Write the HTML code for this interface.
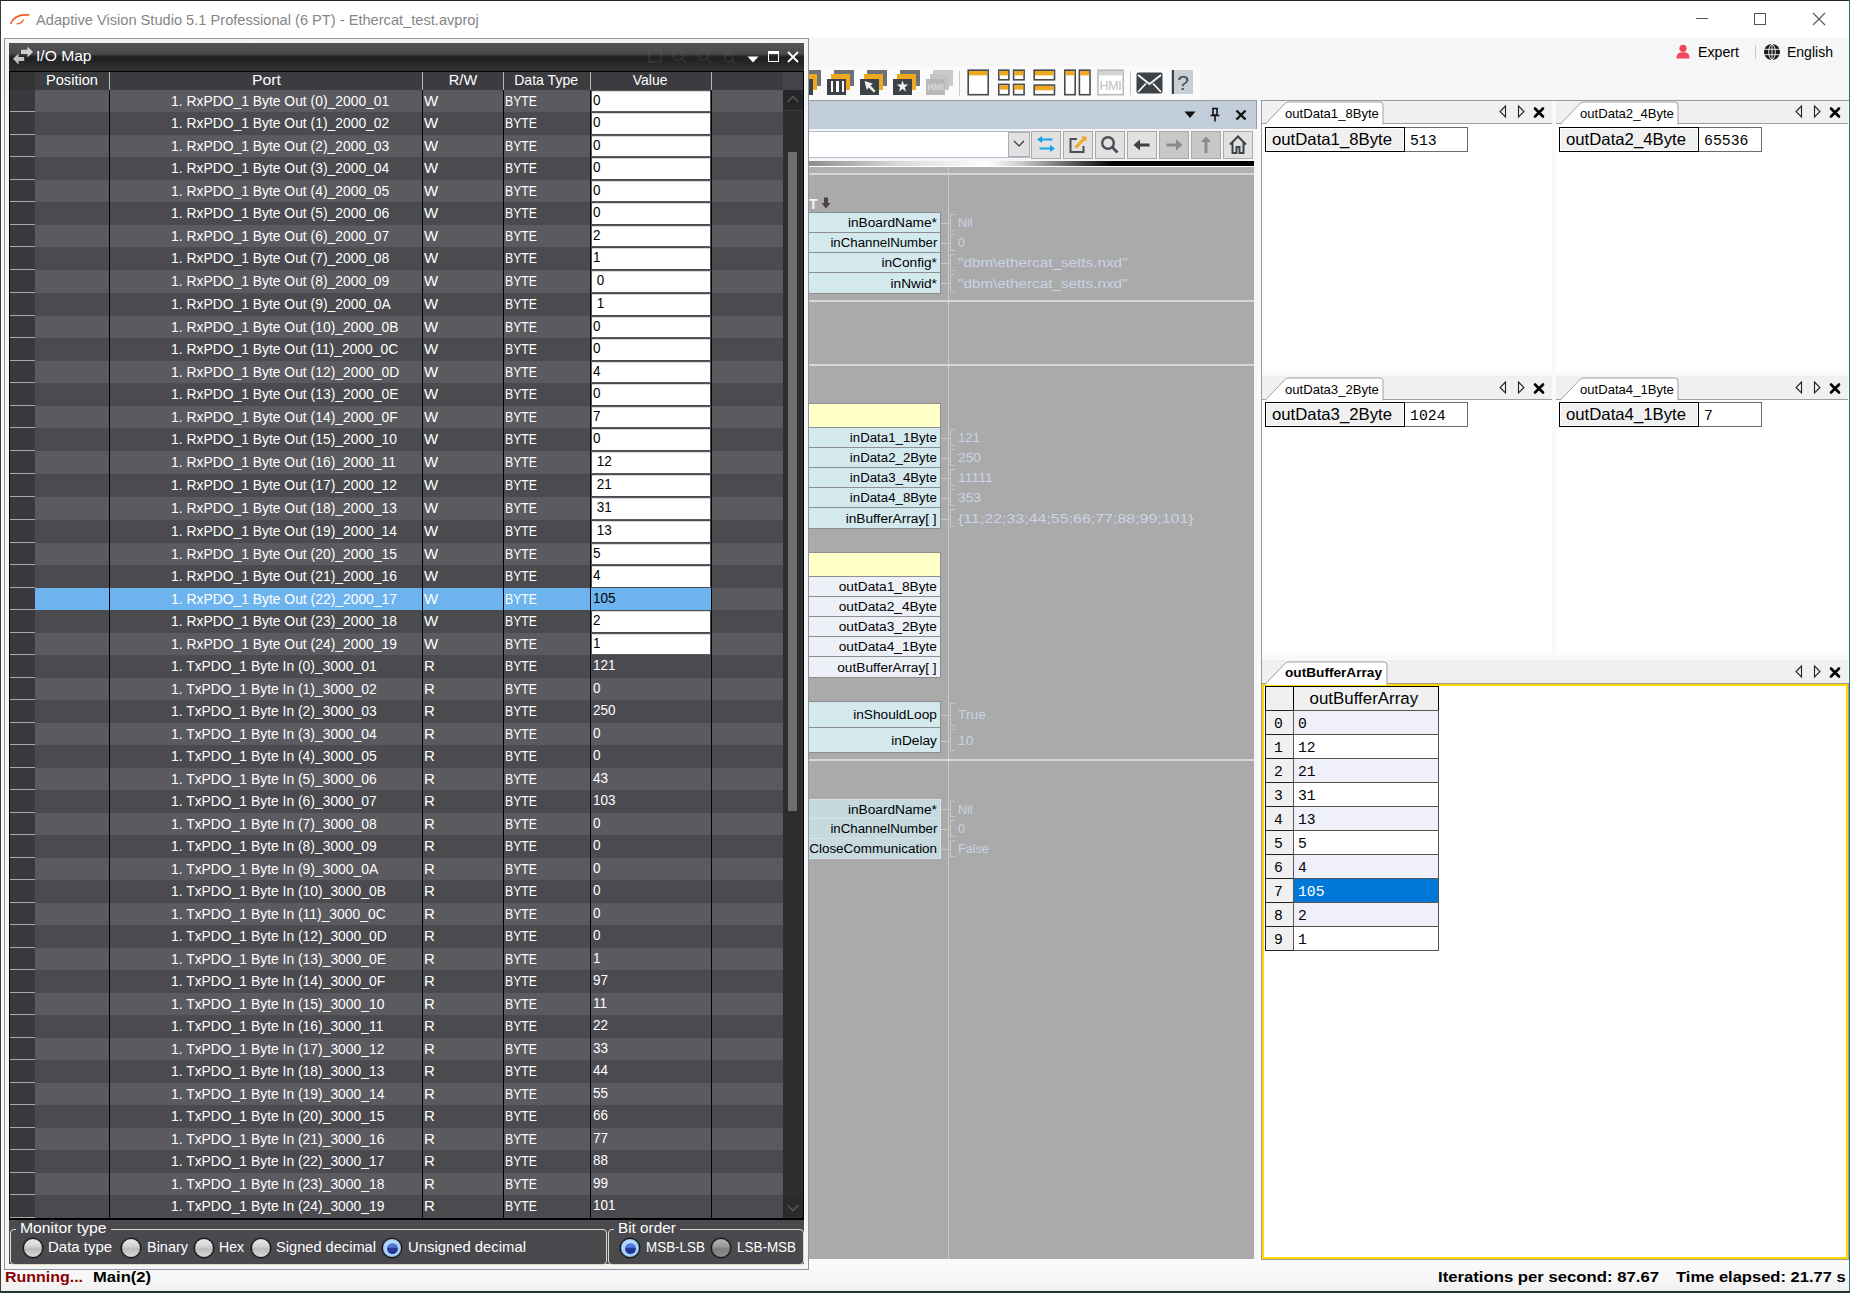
<!DOCTYPE html><html><head><meta charset="utf-8"><style>
*{margin:0;padding:0;box-sizing:border-box}
html,body{width:1850px;height:1293px;overflow:hidden;background:#f0f0f0;font-family:"Liberation Sans",sans-serif;}
.ab{position:absolute}
.t{position:absolute;white-space:pre;line-height:1}
</style></head><body>

<div class="ab" style="left:0px;top:0px;width:1850px;height:1293px;background:#f9f9f9"></div>
<div class="ab" style="left:0px;top:0px;width:1850px;height:38px;background:#ffffff"></div>
<div class="ab" style="left:0px;top:38px;width:1850px;height:62px;background:#f6f6f6"></div>
<div class="ab" style="left:790px;top:66px;width:411px;height:34px;background:#fafafa"></div>
<div class="ab" style="left:0px;top:1259px;width:1850px;height:32px;background:linear-gradient(#fafafa,#f7f7f7 60%,#efefef)"></div>
<div class="ab" style="left:0px;top:0px;width:1850px;height:1px;background:#262626"></div>
<div class="ab" style="left:0px;top:0px;width:1px;height:1293px;background:#3a3a3a"></div>
<div class="ab" style="left:1849px;top:0px;width:1px;height:1293px;background:#2f6f78"></div>
<div class="ab" style="left:0px;top:1291px;width:1850px;height:2px;background:#263238"></div>
<svg class="ab" style="left:9px;top:12px" width="22" height="14" viewBox="0 0 22 14"><path d="M1.5 12 C4 5 11 2 20.5 3" stroke="#f05a22" stroke-width="1.7" fill="none"/><path d="M7.5 11.8 C10.5 11.8 13.5 10 14.5 7.5" stroke="#f05a22" stroke-width="1.3" fill="none"/></svg>
<div class="t" style="left:35.50px;top:12.92px;font-size:14.5px;font-family:'Liberation Sans', sans-serif;font-weight:normal;color:#858585;transform:scaleX(1.0085);transform-origin:left 0;">Adaptive Vision Studio 5.1 Professional (6 PT) - Ethercat_test.avproj</div>
<div class="ab" style="left:1696px;top:18px;width:12px;height:1px;background:#555"></div>
<div class="ab" style="left:1754px;top:13px;width:12px;height:12px;border:1px solid #555"></div>
<svg class="ab" style="left:1812px;top:12px" width="14" height="14"><path d="M1 1L13 13M13 1L1 13" stroke="#555" stroke-width="1.1"/></svg>
<svg class="ab" style="left:1676px;top:44px" width="14" height="15" viewBox="0 0 14 15"><circle cx="7" cy="4.3" r="3.6" fill="#f0475c"/><path d="M0.5 14.5 C0.5 9.5 3 8.3 7 8.3 C11 8.3 13.5 9.5 13.5 14.5Z" fill="#f0475c"/></svg>
<div class="t" style="left:1698px;top:45px;font-size:14.2px;color:#000">Expert</div>
<div class="ab" style="left:1755px;top:45px;width:1px;height:14px;background:#c8c8c8"></div>
<svg class="ab" style="left:1763px;top:43px" width="18" height="18" viewBox="0 0 18 18"><circle cx="9" cy="9" r="8" fill="#1a1a1a"/><g stroke="#f9f9f9" stroke-width="0.9" fill="none"><ellipse cx="9" cy="9" rx="3.3" ry="7.6"/><line x1="9" y1="1" x2="9" y2="17"/><line x1="1" y1="6.3" x2="17" y2="6.3"/><line x1="1" y1="11.7" x2="17" y2="11.7"/></g></svg>
<div class="t" style="left:1787px;top:45px;font-size:14px;color:#000">English</div>
<div class="ab" style="left:801px;top:70px;width:20px;height:16px;background:#6b7278"></div>
<div class="ab" style="left:798px;top:74px;width:19px;height:16px;background:#f0a81e"></div>
<div class="ab" style="left:794px;top:79px;width:19px;height:16px;background:#3d4247"></div>
<div class="ab" style="left:834px;top:70px;width:20px;height:16px;background:#6b7278"></div>
<div class="ab" style="left:831px;top:74px;width:19px;height:16px;background:#f0a81e"></div>
<div class="ab" style="left:827px;top:79px;width:19px;height:16px;background:#3d4247"></div>
<div class="ab" style="left:830.5px;top:81px;width:2.5px;height:11px;background:#fff"></div><div class="ab" style="left:836px;top:81px;width:2.5px;height:11px;background:#fff"></div><div class="ab" style="left:841.5px;top:81px;width:2.5px;height:11px;background:#fff"></div>
<div class="ab" style="left:867px;top:70px;width:20px;height:16px;background:#6b7278"></div>
<div class="ab" style="left:864px;top:74px;width:19px;height:16px;background:#f0a81e"></div>
<div class="ab" style="left:860px;top:79px;width:19px;height:16px;background:#3d4247"></div>
<svg class="ab" style="left:863px;top:80px" width="14" height="14" viewBox="0 0 14 14"><path d="M1.5 1L10 3.8L7.4 5.6L12.5 10.8L10.8 12.5L5.6 7.4L3.8 10Z" fill="#f2f2f2"/></svg>
<div class="ab" style="left:900px;top:70px;width:20px;height:16px;background:#6b7278"></div>
<div class="ab" style="left:897px;top:74px;width:19px;height:16px;background:#f0a81e"></div>
<div class="ab" style="left:893px;top:79px;width:19px;height:16px;background:#3d4247"></div>
<svg class="ab" style="left:896px;top:80px" width="13" height="13" viewBox="0 0 13 13"><path d="M6.5 0.5L7.9 4.6L12.3 4.6L8.8 7.3L10.1 11.6L6.5 9L2.9 11.6L4.2 7.3L0.7 4.6L5.1 4.6Z" fill="#f2f2f2"/></svg>
<div class="ab" style="left:933px;top:70px;width:20px;height:16px;background:#c9c9c9"></div>
<div class="ab" style="left:930px;top:74px;width:19px;height:16px;background:#c4c4c4"></div>
<div class="ab" style="left:926px;top:79px;width:19px;height:16px;background:#b8b8b8"></div>
<div class="t" style="left:926px;top:83px;font-size:9px;color:#d8d8d8;font-weight:bold;width:19px;text-align:center">HMI</div>
<div class="ab" style="left:959px;top:71px;width:1px;height:25px;background:#c8c8c8"></div>
<svg class="ab" style="left:967px;top:69px" width="28" height="27" viewBox="0 0 28 27"><rect x="1.2000000000000002" y="1.2000000000000002" width="20.0" height="24.5" fill="#fff" stroke="#454b51" stroke-width="1.6"/><rect x="2.0" y="2.0" width="18.400000000000002" height="4.4" fill="#f0a81e"/></svg>
<svg class="ab" style="left:998px;top:69px" width="28" height="27" viewBox="0 0 28 27"><rect x="0.8" y="1.2000000000000002" width="10.1" height="9.6" fill="#fff" stroke="#454b51" stroke-width="1.6"/><rect x="1.6" y="2.0" width="8.5" height="4.4" fill="#f0a81e"/><rect x="15.600000000000001" y="1.2000000000000002" width="10.5" height="9.6" fill="#fff" stroke="#454b51" stroke-width="1.6"/><rect x="16.400000000000002" y="2.0" width="8.899999999999999" height="4.4" fill="#f0a81e"/><rect x="0.8" y="15.4" width="10.1" height="10.3" fill="#fff" stroke="#454b51" stroke-width="1.6"/><rect x="1.6" y="16.2" width="8.5" height="4.4" fill="#f0a81e"/><rect x="15.600000000000001" y="15.4" width="10.5" height="10.3" fill="#fff" stroke="#454b51" stroke-width="1.6"/><rect x="16.400000000000002" y="16.2" width="8.899999999999999" height="4.4" fill="#f0a81e"/></svg>
<svg class="ab" style="left:1033px;top:69px" width="28" height="27" viewBox="0 0 28 27"><rect x="1.2000000000000002" y="1.2000000000000002" width="20.299999999999997" height="9.6" fill="#fff" stroke="#454b51" stroke-width="1.6"/><rect x="2.0" y="2.0" width="18.7" height="4.4" fill="#f0a81e"/><rect x="1.2000000000000002" y="16.1" width="20.299999999999997" height="9.6" fill="#fff" stroke="#454b51" stroke-width="1.6"/><rect x="2.0" y="16.900000000000002" width="18.7" height="4.4" fill="#f0a81e"/></svg>
<svg class="ab" style="left:1064px;top:69px" width="28" height="27" viewBox="0 0 28 27"><rect x="0.8" y="1.2000000000000002" width="10.4" height="24.5" fill="#fff" stroke="#454b51" stroke-width="1.6"/><rect x="1.6" y="2.0" width="8.8" height="4.4" fill="#f0a81e"/><rect x="15.4" y="1.2000000000000002" width="10.6" height="24.5" fill="#fff" stroke="#454b51" stroke-width="1.6"/><rect x="16.2" y="2.0" width="9.0" height="4.4" fill="#f0a81e"/></svg>
<svg class="ab" style="left:1097px;top:69px" width="28" height="27" viewBox="0 0 28 27"><rect x="1.0" y="1.2000000000000002" width="25.2" height="24.5" fill="#fff" stroke="#b9b9b9" stroke-width="1.6"/><rect x="1.8" y="2.0" width="23.6" height="4.4" fill="#d2d2d2"/></svg>
<div class="t" style="left:1097px;top:80px;font-size:12.5px;color:#bdbdbd;width:27px;text-align:center;letter-spacing:-0.3px">HMI</div>
<div class="ab" style="left:1130px;top:71px;width:1px;height:24px;background:#c8c8c8"></div>
<svg class="ab" style="left:1136px;top:72px" width="27" height="22" viewBox="0 0 27 22"><rect x="0.5" y="0.5" width="26" height="21" rx="2" fill="#3d4247"/><path d="M2 3L13.5 12L25 3M2 20L10 11.5M25 20L17 11.5" stroke="#f9f9f9" stroke-width="1.8" fill="none"/></svg>
<div class="ab" style="left:1171px;top:70px;width:22px;height:24px;background:#c8cfd4"></div>
<div class="ab" style="left:1172px;top:70px;width:2px;height:24px;background:#3d4247"></div>
<div class="t" style="left:1172px;top:72px;font-size:21px;color:#454b51;width:22px;text-align:center">?</div>
<div class="ab" style="left:808px;top:100px;width:449px;height:1159px;background:#f5f5f5"></div>
<div class="ab" style="left:808px;top:100px;width:449px;height:29px;background:#c1cdd9;border-top:1px solid #9a9a9a;border-right:1px solid #9a9a9a"></div>
<svg class="ab" style="left:1184px;top:111px" width="12" height="8"><path d="M0.5 0.5H11.5L6 7Z" fill="#111"/></svg>
<svg class="ab" style="left:1209px;top:107px" width="12" height="16" viewBox="0 0 12 16"><path d="M3 1.5H9M4 1.5V8H8V1.5M1.5 8.5H10.5M6 8.5V14.5" stroke="#111" stroke-width="1.6" fill="none"/></svg>
<svg class="ab" style="left:1235px;top:109px" width="12" height="12"><path d="M1.5 1.5L10.5 10.5M10.5 1.5L1.5 10.5" stroke="#111" stroke-width="2.4"/></svg>
<div class="ab" style="left:808px;top:131px;width:222px;height:27px;background:#fff;border-top:1px solid #aebdd0;border-bottom:1px solid #aebdd0"></div>
<div class="ab" style="left:1008px;top:132px;width:22px;height:25px;background:#e1e1e1;border:1px solid #adadad"></div>
<svg class="ab" style="left:1013px;top:140px" width="12" height="8"><path d="M1 1L6 6L11 1" stroke="#333" stroke-width="1.2" fill="none"/></svg>
<div class="ab" style="left:1031px;top:131px;width:30px;height:28px;background:#e1e1e1;border:1px solid #a9a9a9"></div>
<div class="ab" style="left:1063px;top:131px;width:30px;height:28px;background:#e1e1e1;border:1px solid #a9a9a9"></div>
<div class="ab" style="left:1095px;top:131px;width:30px;height:28px;background:#e1e1e1;border:1px solid #a9a9a9"></div>
<div class="ab" style="left:1127px;top:131px;width:30px;height:28px;background:#e1e1e1;border:1px solid #a9a9a9"></div>
<div class="ab" style="left:1159px;top:131px;width:30px;height:28px;background:#c8c8c8;border:1px solid #a9a9a9"></div>
<div class="ab" style="left:1191px;top:131px;width:30px;height:28px;background:#c8c8c8;border:1px solid #a9a9a9"></div>
<div class="ab" style="left:1223px;top:131px;width:30px;height:28px;background:#e1e1e1;border:1px solid #a9a9a9"></div>
<svg class="ab" style="left:1036px;top:135px" width="20" height="20" viewBox="0 0 20 20"><g fill="#13a3ec"><path d="M1 4.5L6 1V3.5H16.5V5.5H6V8Z"/><path d="M19 13.5L14 10V12.5H3.5V14.5H14V17Z"/></g></svg>
<svg class="ab" style="left:1068px;top:135px" width="20" height="20" viewBox="0 0 20 20"><path d="M9 4H2.5V17H15.5V11" stroke="#4a4f55" stroke-width="2" fill="none"/><path d="M7.5 12.5L16 4" stroke="#f0a81e" stroke-width="3"/><path d="M13 1.5H18.5V7Z" fill="#f0a81e"/></svg>
<svg class="ab" style="left:1100px;top:135px" width="20" height="20" viewBox="0 0 20 20"><circle cx="8" cy="8" r="5.8" stroke="#4a4f55" stroke-width="2.4" fill="#e1e1e1"/><path d="M12.3 12.3L17.5 17.5" stroke="#4a4f55" stroke-width="2.8"/></svg>
<svg class="ab" style="left:1132px;top:135px" width="20" height="20" viewBox="0 0 20 20"><path d="M1.5 10L8 4.5V8.5H17.5V11.5H8V15.5Z" fill="#3d4247"/></svg>
<svg class="ab" style="left:1164px;top:135px" width="20" height="20" viewBox="0 0 20 20"><path d="M18.5 10L12 4.5V8.5H2.5V11.5H12V15.5Z" fill="#8a8a8a"/></svg>
<svg class="ab" style="left:1196px;top:135px" width="20" height="20" viewBox="0 0 20 20"><path d="M10 1.5L15 7H11.5V18H8.5V7H5Z" fill="#8a8a8a"/></svg>
<svg class="ab" style="left:1228px;top:134px" width="20" height="22" viewBox="0 0 20 22"><path d="M2 10.5L10 2.5L18 10.5M4.5 8V19H8.5V13H11.5V19H15.5V8" stroke="#3d4247" stroke-width="2" fill="none"/></svg>
<div class="ab" style="left:808px;top:161px;width:446px;height:5px;background:linear-gradient(90deg,#8c8c8c 0px,#d8d8d8 90px,#ffffff 180px,#c8c8c8 215px,#202020 290px,#000 305px,#000 446px)"></div>
<div class="ab" style="left:808px;top:166px;width:446px;height:1px;background:#ffffff"></div>
<div class="ab" style="left:808px;top:167px;width:446px;height:6px;background:#b1b1b1"></div>
<div class="ab" style="left:808px;top:173px;width:446px;height:2px;background:#d6d6d6"></div>
<div class="ab" style="left:808px;top:175px;width:446px;height:1084px;background:#aaaaaa"></div>
<div class="ab" style="left:948px;top:167px;width:1px;height:1092px;background:#cacaca"></div>
<div class="ab" style="left:808px;top:300px;width:446px;height:2px;background:#d6d6d6"></div>
<div class="ab" style="left:808px;top:364px;width:446px;height:2px;background:#d6d6d6"></div>
<div class="ab" style="left:808px;top:759px;width:446px;height:2px;background:#d6d6d6"></div>
<div class="t" style="left:809.00px;top:197.15px;font-size:14px;font-family:'Liberation Sans', sans-serif;font-weight:bold;color:#f4f4f4;">T</div>
<svg class="ab" style="left:821px;top:197px" width="10" height="12" viewBox="0 0 10 12"><path d="M3 0.5H7V6H9.5L5 11.5L0.5 6H3Z" fill="#4d4340"/></svg>
<div class="ab" style="left:806px;top:212px;width:135px;height:21px;background:#d4e9ee;border:1px solid #8e8e8e"></div>
<div class="t" style="left:847.90px;top:216.20px;font-size:13.7px;font-family:'Liberation Sans', sans-serif;font-weight:normal;color:#000;">inBoardName*</div>
<div class="ab" style="left:941px;top:223px;width:10px;height:1px;background:#c6c6c6"></div>
<div class="ab" style="left:950px;top:214px;width:1px;height:17px;background:#c6c6c6"></div>
<div class="ab" style="left:950px;top:214px;width:5px;height:1px;background:#c6c6c6"></div>
<div class="ab" style="left:950px;top:230px;width:5px;height:1px;background:#c6c6c6"></div>
<div class="t" style="left:958.00px;top:217.13px;font-size:12.6px;font-family:'Liberation Sans', sans-serif;font-weight:normal;color:#c9d3e6;transform:scaleX(0.9933);transform-origin:left 0;">Nil</div>
<div class="ab" style="left:806px;top:232px;width:135px;height:21px;background:#d4e9ee;border:1px solid #8e8e8e"></div>
<div class="t" style="left:826.58px;top:236.20px;font-size:13.7px;font-family:'Liberation Sans', sans-serif;font-weight:normal;color:#000;transform:scaleX(0.9690);transform-origin:right 0;">inChannelNumber</div>
<div class="ab" style="left:941px;top:243px;width:10px;height:1px;background:#c6c6c6"></div>
<div class="ab" style="left:950px;top:234px;width:1px;height:17px;background:#c6c6c6"></div>
<div class="ab" style="left:950px;top:234px;width:5px;height:1px;background:#c6c6c6"></div>
<div class="ab" style="left:950px;top:250px;width:5px;height:1px;background:#c6c6c6"></div>
<div class="t" style="left:958.00px;top:237.13px;font-size:12.6px;font-family:'Liberation Sans', sans-serif;font-weight:normal;color:#c9d3e6;">0</div>
<div class="ab" style="left:806px;top:252px;width:135px;height:21px;background:#d4e9ee;border:1px solid #8e8e8e"></div>
<div class="t" style="left:881.40px;top:256.20px;font-size:13.7px;font-family:'Liberation Sans', sans-serif;font-weight:normal;color:#000;">inConfig*</div>
<div class="ab" style="left:941px;top:263px;width:10px;height:1px;background:#c6c6c6"></div>
<div class="ab" style="left:950px;top:254px;width:1px;height:17px;background:#c6c6c6"></div>
<div class="ab" style="left:950px;top:254px;width:5px;height:1px;background:#c6c6c6"></div>
<div class="ab" style="left:950px;top:270px;width:5px;height:1px;background:#c6c6c6"></div>
<div class="t" style="left:958.00px;top:257.13px;font-size:12.6px;font-family:'Liberation Sans', sans-serif;font-weight:normal;color:#c9d3e6;transform:scaleX(1.2114);transform-origin:left 0;">"dbm\ethercat_setts.nxd"</div>
<div class="ab" style="left:806px;top:272px;width:135px;height:22px;background:#d4e9ee;border:1px solid #8e8e8e"></div>
<div class="t" style="left:890.56px;top:276.70px;font-size:13.7px;font-family:'Liberation Sans', sans-serif;font-weight:normal;color:#000;">inNwid*</div>
<div class="ab" style="left:941px;top:283px;width:10px;height:1px;background:#c6c6c6"></div>
<div class="ab" style="left:950px;top:274px;width:1px;height:18px;background:#c6c6c6"></div>
<div class="ab" style="left:950px;top:274px;width:5px;height:1px;background:#c6c6c6"></div>
<div class="ab" style="left:950px;top:291px;width:5px;height:1px;background:#c6c6c6"></div>
<div class="t" style="left:958.00px;top:277.63px;font-size:12.6px;font-family:'Liberation Sans', sans-serif;font-weight:normal;color:#c9d3e6;transform:scaleX(1.2114);transform-origin:left 0;">"dbm\ethercat_setts.nxd"</div>
<div class="ab" style="left:806px;top:403px;width:135px;height:25px;background:#ffffc8;border:1px solid #8e8e8e"></div>
<div class="ab" style="left:806px;top:427px;width:135px;height:21px;background:#d4e9ee;border:1px solid #8e8e8e"></div>
<div class="t" style="left:847.13px;top:431.20px;font-size:13.7px;font-family:'Liberation Sans', sans-serif;font-weight:normal;color:#000;transform:scaleX(0.9680);transform-origin:right 0;">inData1_1Byte</div>
<div class="ab" style="left:941px;top:438px;width:10px;height:1px;background:#c6c6c6"></div>
<div class="ab" style="left:950px;top:429px;width:1px;height:17px;background:#c6c6c6"></div>
<div class="ab" style="left:950px;top:429px;width:5px;height:1px;background:#c6c6c6"></div>
<div class="ab" style="left:950px;top:445px;width:5px;height:1px;background:#c6c6c6"></div>
<div class="t" style="left:958.00px;top:432.13px;font-size:12.6px;font-family:'Liberation Sans', sans-serif;font-weight:normal;color:#c9d3e6;transform:scaleX(1.0465);transform-origin:left 0;">121</div>
<div class="ab" style="left:806px;top:447px;width:135px;height:21px;background:#d4e9ee;border:1px solid #8e8e8e"></div>
<div class="t" style="left:847.13px;top:451.20px;font-size:13.7px;font-family:'Liberation Sans', sans-serif;font-weight:normal;color:#000;transform:scaleX(0.9680);transform-origin:right 0;">inData2_2Byte</div>
<div class="ab" style="left:941px;top:458px;width:10px;height:1px;background:#c6c6c6"></div>
<div class="ab" style="left:950px;top:449px;width:1px;height:17px;background:#c6c6c6"></div>
<div class="ab" style="left:950px;top:449px;width:5px;height:1px;background:#c6c6c6"></div>
<div class="ab" style="left:950px;top:465px;width:5px;height:1px;background:#c6c6c6"></div>
<div class="t" style="left:958.00px;top:452.13px;font-size:12.6px;font-family:'Liberation Sans', sans-serif;font-weight:normal;color:#c9d3e6;transform:scaleX(1.0941);transform-origin:left 0;">250</div>
<div class="ab" style="left:806px;top:467px;width:135px;height:21px;background:#d4e9ee;border:1px solid #8e8e8e"></div>
<div class="t" style="left:847.13px;top:471.20px;font-size:13.7px;font-family:'Liberation Sans', sans-serif;font-weight:normal;color:#000;transform:scaleX(0.9680);transform-origin:right 0;">inData3_4Byte</div>
<div class="ab" style="left:941px;top:478px;width:10px;height:1px;background:#c6c6c6"></div>
<div class="ab" style="left:950px;top:469px;width:1px;height:17px;background:#c6c6c6"></div>
<div class="ab" style="left:950px;top:469px;width:5px;height:1px;background:#c6c6c6"></div>
<div class="ab" style="left:950px;top:485px;width:5px;height:1px;background:#c6c6c6"></div>
<div class="t" style="left:958.00px;top:472.13px;font-size:12.6px;font-family:'Liberation Sans', sans-serif;font-weight:normal;color:#c9d3e6;transform:scaleX(1.1131);transform-origin:left 0;">11111</div>
<div class="ab" style="left:806px;top:487px;width:135px;height:21px;background:#d4e9ee;border:1px solid #8e8e8e"></div>
<div class="t" style="left:847.13px;top:491.20px;font-size:13.7px;font-family:'Liberation Sans', sans-serif;font-weight:normal;color:#000;transform:scaleX(0.9680);transform-origin:right 0;">inData4_8Byte</div>
<div class="ab" style="left:941px;top:498px;width:10px;height:1px;background:#c6c6c6"></div>
<div class="ab" style="left:950px;top:489px;width:1px;height:17px;background:#c6c6c6"></div>
<div class="ab" style="left:950px;top:489px;width:5px;height:1px;background:#c6c6c6"></div>
<div class="ab" style="left:950px;top:505px;width:5px;height:1px;background:#c6c6c6"></div>
<div class="t" style="left:958.00px;top:492.13px;font-size:12.6px;font-family:'Liberation Sans', sans-serif;font-weight:normal;color:#c9d3e6;transform:scaleX(1.0941);transform-origin:left 0;">353</div>
<div class="ab" style="left:806px;top:507px;width:135px;height:22px;background:#d4e9ee;border:1px solid #8e8e8e"></div>
<div class="t" style="left:845.64px;top:511.70px;font-size:13.7px;font-family:'Liberation Sans', sans-serif;font-weight:normal;color:#000;">inBufferArray[ ]</div>
<div class="ab" style="left:941px;top:519px;width:10px;height:1px;background:#c6c6c6"></div>
<div class="ab" style="left:950px;top:509px;width:1px;height:18px;background:#c6c6c6"></div>
<div class="ab" style="left:950px;top:509px;width:5px;height:1px;background:#c6c6c6"></div>
<div class="ab" style="left:950px;top:526px;width:5px;height:1px;background:#c6c6c6"></div>
<div class="t" style="left:958.00px;top:512.63px;font-size:12.6px;font-family:'Liberation Sans', sans-serif;font-weight:normal;color:#c9d3e6;transform:scaleX(1.2668);transform-origin:left 0;">{11;22;33;44;55;66;77;88;99;101}</div>
<div class="ab" style="left:806px;top:552px;width:135px;height:25px;background:#ffffc8;border:1px solid #8e8e8e"></div>
<div class="ab" style="left:806px;top:576px;width:135px;height:21px;background:#eef0f8;border:1px solid #8e8e8e"></div>
<div class="t" style="left:838.75px;top:580.20px;font-size:13.7px;font-family:'Liberation Sans', sans-serif;font-weight:normal;color:#000;">outData1_8Byte</div>
<div class="ab" style="left:806px;top:596px;width:135px;height:21px;background:#eef0f8;border:1px solid #8e8e8e"></div>
<div class="t" style="left:838.75px;top:600.20px;font-size:13.7px;font-family:'Liberation Sans', sans-serif;font-weight:normal;color:#000;">outData2_4Byte</div>
<div class="ab" style="left:806px;top:616px;width:135px;height:21px;background:#eef0f8;border:1px solid #8e8e8e"></div>
<div class="t" style="left:838.75px;top:620.20px;font-size:13.7px;font-family:'Liberation Sans', sans-serif;font-weight:normal;color:#000;">outData3_2Byte</div>
<div class="ab" style="left:806px;top:636px;width:135px;height:21px;background:#eef0f8;border:1px solid #8e8e8e"></div>
<div class="t" style="left:838.75px;top:640.20px;font-size:13.7px;font-family:'Liberation Sans', sans-serif;font-weight:normal;color:#000;">outData4_1Byte</div>
<div class="ab" style="left:806px;top:656px;width:135px;height:22px;background:#eef0f8;border:1px solid #8e8e8e"></div>
<div class="t" style="left:837.25px;top:660.70px;font-size:13.7px;font-family:'Liberation Sans', sans-serif;font-weight:normal;color:#000;">outBufferArray[ ]</div>
<div class="ab" style="left:806px;top:701px;width:135px;height:27px;background:#d4e9ee;border:1px solid #8e8e8e"></div>
<div class="t" style="left:853.20px;top:708.20px;font-size:13.7px;font-family:'Liberation Sans', sans-serif;font-weight:normal;color:#000;">inShouldLoop</div>
<div class="ab" style="left:941px;top:715px;width:10px;height:1px;background:#c6c6c6"></div>
<div class="ab" style="left:950px;top:703px;width:1px;height:23px;background:#c6c6c6"></div>
<div class="ab" style="left:950px;top:703px;width:5px;height:1px;background:#c6c6c6"></div>
<div class="ab" style="left:950px;top:725px;width:5px;height:1px;background:#c6c6c6"></div>
<div class="t" style="left:958.00px;top:709.13px;font-size:12.6px;font-family:'Liberation Sans', sans-serif;font-weight:normal;color:#c9d3e6;transform:scaleX(1.1001);transform-origin:left 0;">True</div>
<div class="ab" style="left:806px;top:727px;width:135px;height:26px;background:#d4e9ee;border:1px solid #8e8e8e"></div>
<div class="t" style="left:891.31px;top:733.70px;font-size:13.7px;font-family:'Liberation Sans', sans-serif;font-weight:normal;color:#000;">inDelay</div>
<div class="ab" style="left:941px;top:741px;width:10px;height:1px;background:#c6c6c6"></div>
<div class="ab" style="left:950px;top:729px;width:1px;height:22px;background:#c6c6c6"></div>
<div class="ab" style="left:950px;top:729px;width:5px;height:1px;background:#c6c6c6"></div>
<div class="ab" style="left:950px;top:750px;width:5px;height:1px;background:#c6c6c6"></div>
<div class="t" style="left:958.00px;top:734.63px;font-size:12.6px;font-family:'Liberation Sans', sans-serif;font-weight:normal;color:#c9d3e6;transform:scaleX(1.0988);transform-origin:left 0;">10</div>
<div class="ab" style="left:806px;top:799px;width:135px;height:20px;background:#c5d9df;border:1px solid #d6e4e8"></div>
<div class="t" style="left:847.90px;top:802.70px;font-size:13.7px;font-family:'Liberation Sans', sans-serif;font-weight:normal;color:#000;">inBoardName*</div>
<div class="ab" style="left:941px;top:809px;width:10px;height:1px;background:#c6c6c6"></div>
<div class="ab" style="left:950px;top:801px;width:1px;height:16px;background:#c6c6c6"></div>
<div class="ab" style="left:950px;top:801px;width:5px;height:1px;background:#c6c6c6"></div>
<div class="ab" style="left:950px;top:816px;width:5px;height:1px;background:#c6c6c6"></div>
<div class="t" style="left:958.00px;top:803.63px;font-size:12.6px;font-family:'Liberation Sans', sans-serif;font-weight:normal;color:#c9d3e6;transform:scaleX(0.9933);transform-origin:left 0;">Nil</div>
<div class="ab" style="left:806px;top:818px;width:135px;height:21px;background:#c5d9df;border:1px solid #d6e4e8"></div>
<div class="t" style="left:826.58px;top:822.20px;font-size:13.7px;font-family:'Liberation Sans', sans-serif;font-weight:normal;color:#000;transform:scaleX(0.9690);transform-origin:right 0;">inChannelNumber</div>
<div class="ab" style="left:941px;top:829px;width:10px;height:1px;background:#c6c6c6"></div>
<div class="ab" style="left:950px;top:820px;width:1px;height:17px;background:#c6c6c6"></div>
<div class="ab" style="left:950px;top:820px;width:5px;height:1px;background:#c6c6c6"></div>
<div class="ab" style="left:950px;top:836px;width:5px;height:1px;background:#c6c6c6"></div>
<div class="t" style="left:958.00px;top:823.13px;font-size:12.6px;font-family:'Liberation Sans', sans-serif;font-weight:normal;color:#c9d3e6;">0</div>
<div class="ab" style="left:806px;top:838px;width:135px;height:21px;background:#c5d9df;border:1px solid #d6e4e8"></div>
<div class="t" style="left:806.80px;top:842.20px;font-size:13.7px;font-family:'Liberation Sans', sans-serif;font-weight:normal;color:#000;transform:scaleX(0.9831);transform-origin:right 0;">CloseCommunication</div>
<div class="ab" style="left:941px;top:849px;width:10px;height:1px;background:#c6c6c6"></div>
<div class="ab" style="left:950px;top:840px;width:1px;height:17px;background:#c6c6c6"></div>
<div class="ab" style="left:950px;top:840px;width:5px;height:1px;background:#c6c6c6"></div>
<div class="ab" style="left:950px;top:856px;width:5px;height:1px;background:#c6c6c6"></div>
<div class="t" style="left:958.00px;top:843.13px;font-size:12.6px;font-family:'Liberation Sans', sans-serif;font-weight:normal;color:#c9d3e6;">False</div>
<div class="ab" style="left:1257px;top:100px;width:592px;height:1159px;background:#f9f9f9"></div>
<div class="ab" style="left:1261px;top:100px;width:291px;height:23px;background:#f0f0f0"></div>
<div class="ab" style="left:1261px;top:123px;width:291px;height:1px;background:#a0a0a0"></div>
<div class="ab" style="left:1261px;top:124px;width:291px;height:248px;background:#fff"></div>
<svg class="ab" style="left:1265px;top:101px" width="120" height="24" viewBox="0 0 120 24"><path d="M0 23.5L20 2.5Q21.5 1 24 1H115Q118 1 118 4V23.5" fill="#fff" stroke="#a0a0a0" stroke-width="1"/><rect x="1" y="23" width="116" height="2" fill="#fff"/></svg>
<div class="t" style="left:1285.00px;top:106.71px;font-size:13.1px;font-family:'Liberation Sans', sans-serif;font-weight:normal;color:#000;">outData1_8Byte</div>
<svg class="ab" style="left:1499px;top:105px" width="46" height="14" viewBox="0 0 46 14"><path d="M6.5 1V12L1 6.5Z" fill="none" stroke="#222" stroke-width="1.1"/><path d="M19.5 1V12L25 6.5Z" fill="none" stroke="#222" stroke-width="1.1"/><path d="M36 3.5L44 11.5M44 3.5L36 11.5" stroke="#000" stroke-width="2.6" stroke-linecap="round"/></svg>
<div class="ab" style="left:1556px;top:100px;width:292px;height:23px;background:#f0f0f0"></div>
<div class="ab" style="left:1556px;top:123px;width:292px;height:1px;background:#a0a0a0"></div>
<div class="ab" style="left:1556px;top:124px;width:292px;height:248px;background:#fff"></div>
<svg class="ab" style="left:1560px;top:101px" width="120" height="24" viewBox="0 0 120 24"><path d="M0 23.5L20 2.5Q21.5 1 24 1H115Q118 1 118 4V23.5" fill="#fff" stroke="#a0a0a0" stroke-width="1"/><rect x="1" y="23" width="116" height="2" fill="#fff"/></svg>
<div class="t" style="left:1580.00px;top:106.71px;font-size:13.1px;font-family:'Liberation Sans', sans-serif;font-weight:normal;color:#000;">outData2_4Byte</div>
<svg class="ab" style="left:1795px;top:105px" width="46" height="14" viewBox="0 0 46 14"><path d="M6.5 1V12L1 6.5Z" fill="none" stroke="#222" stroke-width="1.1"/><path d="M19.5 1V12L25 6.5Z" fill="none" stroke="#222" stroke-width="1.1"/><path d="M36 3.5L44 11.5M44 3.5L36 11.5" stroke="#000" stroke-width="2.6" stroke-linecap="round"/></svg>
<div class="ab" style="left:1261px;top:376px;width:291px;height:23px;background:#f0f0f0"></div>
<div class="ab" style="left:1261px;top:399px;width:291px;height:1px;background:#a0a0a0"></div>
<div class="ab" style="left:1261px;top:400px;width:291px;height:255px;background:#fff"></div>
<svg class="ab" style="left:1265px;top:377px" width="120" height="24" viewBox="0 0 120 24"><path d="M0 23.5L20 2.5Q21.5 1 24 1H115Q118 1 118 4V23.5" fill="#fff" stroke="#a0a0a0" stroke-width="1"/><rect x="1" y="23" width="116" height="2" fill="#fff"/></svg>
<div class="t" style="left:1285.00px;top:382.71px;font-size:13.1px;font-family:'Liberation Sans', sans-serif;font-weight:normal;color:#000;">outData3_2Byte</div>
<svg class="ab" style="left:1499px;top:381px" width="46" height="14" viewBox="0 0 46 14"><path d="M6.5 1V12L1 6.5Z" fill="none" stroke="#222" stroke-width="1.1"/><path d="M19.5 1V12L25 6.5Z" fill="none" stroke="#222" stroke-width="1.1"/><path d="M36 3.5L44 11.5M44 3.5L36 11.5" stroke="#000" stroke-width="2.6" stroke-linecap="round"/></svg>
<div class="ab" style="left:1556px;top:376px;width:292px;height:23px;background:#f0f0f0"></div>
<div class="ab" style="left:1556px;top:399px;width:292px;height:1px;background:#a0a0a0"></div>
<div class="ab" style="left:1556px;top:400px;width:292px;height:255px;background:#fff"></div>
<svg class="ab" style="left:1560px;top:377px" width="120" height="24" viewBox="0 0 120 24"><path d="M0 23.5L20 2.5Q21.5 1 24 1H115Q118 1 118 4V23.5" fill="#fff" stroke="#a0a0a0" stroke-width="1"/><rect x="1" y="23" width="116" height="2" fill="#fff"/></svg>
<div class="t" style="left:1580.00px;top:382.71px;font-size:13.1px;font-family:'Liberation Sans', sans-serif;font-weight:normal;color:#000;">outData4_1Byte</div>
<svg class="ab" style="left:1795px;top:381px" width="46" height="14" viewBox="0 0 46 14"><path d="M6.5 1V12L1 6.5Z" fill="none" stroke="#222" stroke-width="1.1"/><path d="M19.5 1V12L25 6.5Z" fill="none" stroke="#222" stroke-width="1.1"/><path d="M36 3.5L44 11.5M44 3.5L36 11.5" stroke="#000" stroke-width="2.6" stroke-linecap="round"/></svg>
<div class="ab" style="left:1261px;top:660px;width:587px;height:23px;background:#f0f0f0"></div>
<div class="ab" style="left:1261px;top:683px;width:587px;height:1px;background:#a0a0a0"></div>
<div class="ab" style="left:1261px;top:683px;width:588px;height:577px;background:#fff;border:1px solid #9a9a9a;box-shadow:inset 0 0 0 2px #ffd800"></div>
<svg class="ab" style="left:1265px;top:661px" width="124" height="24" viewBox="0 0 124 24"><path d="M0 23.5L20 2.5Q21.5 1 24 1H119Q122 1 122 4V23.5" fill="#fff" stroke="#a0a0a0" stroke-width="1"/><rect x="1" y="23" width="120" height="2" fill="#fff"/></svg>
<div class="t" style="left:1285.00px;top:666.37px;font-size:13.5px;font-family:'Liberation Sans', sans-serif;font-weight:bold;color:#000;transform:scaleX(1.0103);transform-origin:left 0;">outBufferArray</div>
<svg class="ab" style="left:1795px;top:665px" width="46" height="14" viewBox="0 0 46 14"><path d="M6.5 1V12L1 6.5Z" fill="none" stroke="#222" stroke-width="1.1"/><path d="M19.5 1V12L25 6.5Z" fill="none" stroke="#222" stroke-width="1.1"/><path d="M36 3.5L44 11.5M44 3.5L36 11.5" stroke="#000" stroke-width="2.6" stroke-linecap="round"/></svg>
<div class="ab" style="left:1261px;top:100px;width:1px;height:1159px;background:#9a9a9a"></div>
<div class="ab" style="left:1261px;top:100px;width:588px;height:1px;background:#9a9a9a"></div>
<div class="ab" style="left:1404px;top:127px;width:64px;height:25px;background:#fff;border:1px solid #6a6a6a"></div>
<div class="ab" style="left:1265px;top:127px;width:140px;height:25px;background:#f0f0f0;border:1px solid #000;box-shadow:inset 0 0 0 1px #fff"></div>
<div class="t" style="left:1272.00px;top:131.03px;font-size:16.5px;font-family:'Liberation Sans', sans-serif;font-weight:normal;color:#000;transform:scaleX(1.0141);transform-origin:left 0;">outData1_8Byte</div>
<div class="t" style="left:1410.00px;top:133.66px;font-size:14.8px;font-family:'Liberation Mono', monospace;font-weight:normal;color:#000;">513</div>
<div class="ab" style="left:1698px;top:127px;width:64px;height:25px;background:#fff;border:1px solid #6a6a6a"></div>
<div class="ab" style="left:1559px;top:127px;width:140px;height:25px;background:#f0f0f0;border:1px solid #000;box-shadow:inset 0 0 0 1px #fff"></div>
<div class="t" style="left:1566.00px;top:131.03px;font-size:16.5px;font-family:'Liberation Sans', sans-serif;font-weight:normal;color:#000;transform:scaleX(1.0141);transform-origin:left 0;">outData2_4Byte</div>
<div class="t" style="left:1704.00px;top:133.66px;font-size:14.8px;font-family:'Liberation Mono', monospace;font-weight:normal;color:#000;">65536</div>
<div class="ab" style="left:1404px;top:402px;width:64px;height:25px;background:#fff;border:1px solid #6a6a6a"></div>
<div class="ab" style="left:1265px;top:402px;width:140px;height:25px;background:#f0f0f0;border:1px solid #000;box-shadow:inset 0 0 0 1px #fff"></div>
<div class="t" style="left:1272.00px;top:406.03px;font-size:16.5px;font-family:'Liberation Sans', sans-serif;font-weight:normal;color:#000;transform:scaleX(1.0141);transform-origin:left 0;">outData3_2Byte</div>
<div class="t" style="left:1410.00px;top:408.66px;font-size:14.8px;font-family:'Liberation Mono', monospace;font-weight:normal;color:#000;">1024</div>
<div class="ab" style="left:1698px;top:402px;width:64px;height:25px;background:#fff;border:1px solid #6a6a6a"></div>
<div class="ab" style="left:1559px;top:402px;width:140px;height:25px;background:#f0f0f0;border:1px solid #000;box-shadow:inset 0 0 0 1px #fff"></div>
<div class="t" style="left:1566.00px;top:406.03px;font-size:16.5px;font-family:'Liberation Sans', sans-serif;font-weight:normal;color:#000;transform:scaleX(1.0141);transform-origin:left 0;">outData4_1Byte</div>
<div class="t" style="left:1704.00px;top:408.66px;font-size:14.8px;font-family:'Liberation Mono', monospace;font-weight:normal;color:#000;">7</div>
<div class="ab" style="left:1265px;top:686px;width:174px;height:25px;background:#f0f0f0;border:1px solid #000"></div>
<div class="ab" style="left:1265px;top:686px;width:29px;height:25px;background:#f0f0f0;border:1px solid #000"></div>
<div class="t" style="left:1309.52px;top:690.69px;font-size:16.9px;font-family:'Liberation Sans', sans-serif;font-weight:normal;color:#000;">outBufferArray</div>
<div class="ab" style="left:1265px;top:710px;width:29px;height:25px;background:#f0f0f0;border:1px solid #222"></div>
<div class="ab" style="left:1293px;top:710px;width:146px;height:25px;background:#eff0fa;border:1px solid #555"></div>
<div class="t" style="left:1274.00px;top:716.74px;font-size:14.7px;font-family:'Liberation Mono', monospace;font-weight:normal;color:#000;">0</div>
<div class="t" style="left:1298.00px;top:716.74px;font-size:14.7px;font-family:'Liberation Mono', monospace;font-weight:normal;color:#000;">0</div>
<div class="ab" style="left:1265px;top:734px;width:29px;height:25px;background:#f0f0f0;border:1px solid #222"></div>
<div class="ab" style="left:1293px;top:734px;width:146px;height:25px;background:#ffffff;border:1px solid #555"></div>
<div class="t" style="left:1274.00px;top:740.74px;font-size:14.7px;font-family:'Liberation Mono', monospace;font-weight:normal;color:#000;">1</div>
<div class="t" style="left:1298.00px;top:740.74px;font-size:14.7px;font-family:'Liberation Mono', monospace;font-weight:normal;color:#000;">12</div>
<div class="ab" style="left:1265px;top:758px;width:29px;height:25px;background:#f0f0f0;border:1px solid #222"></div>
<div class="ab" style="left:1293px;top:758px;width:146px;height:25px;background:#eff0fa;border:1px solid #555"></div>
<div class="t" style="left:1274.00px;top:764.74px;font-size:14.7px;font-family:'Liberation Mono', monospace;font-weight:normal;color:#000;">2</div>
<div class="t" style="left:1298.00px;top:764.74px;font-size:14.7px;font-family:'Liberation Mono', monospace;font-weight:normal;color:#000;">21</div>
<div class="ab" style="left:1265px;top:782px;width:29px;height:25px;background:#f0f0f0;border:1px solid #222"></div>
<div class="ab" style="left:1293px;top:782px;width:146px;height:25px;background:#ffffff;border:1px solid #555"></div>
<div class="t" style="left:1274.00px;top:788.74px;font-size:14.7px;font-family:'Liberation Mono', monospace;font-weight:normal;color:#000;">3</div>
<div class="t" style="left:1298.00px;top:788.74px;font-size:14.7px;font-family:'Liberation Mono', monospace;font-weight:normal;color:#000;">31</div>
<div class="ab" style="left:1265px;top:806px;width:29px;height:25px;background:#f0f0f0;border:1px solid #222"></div>
<div class="ab" style="left:1293px;top:806px;width:146px;height:25px;background:#eff0fa;border:1px solid #555"></div>
<div class="t" style="left:1274.00px;top:812.74px;font-size:14.7px;font-family:'Liberation Mono', monospace;font-weight:normal;color:#000;">4</div>
<div class="t" style="left:1298.00px;top:812.74px;font-size:14.7px;font-family:'Liberation Mono', monospace;font-weight:normal;color:#000;">13</div>
<div class="ab" style="left:1265px;top:830px;width:29px;height:25px;background:#f0f0f0;border:1px solid #222"></div>
<div class="ab" style="left:1293px;top:830px;width:146px;height:25px;background:#ffffff;border:1px solid #555"></div>
<div class="t" style="left:1274.00px;top:836.74px;font-size:14.7px;font-family:'Liberation Mono', monospace;font-weight:normal;color:#000;">5</div>
<div class="t" style="left:1298.00px;top:836.74px;font-size:14.7px;font-family:'Liberation Mono', monospace;font-weight:normal;color:#000;">5</div>
<div class="ab" style="left:1265px;top:854px;width:29px;height:25px;background:#f0f0f0;border:1px solid #222"></div>
<div class="ab" style="left:1293px;top:854px;width:146px;height:25px;background:#eff0fa;border:1px solid #555"></div>
<div class="t" style="left:1274.00px;top:860.74px;font-size:14.7px;font-family:'Liberation Mono', monospace;font-weight:normal;color:#000;">6</div>
<div class="t" style="left:1298.00px;top:860.74px;font-size:14.7px;font-family:'Liberation Mono', monospace;font-weight:normal;color:#000;">4</div>
<div class="ab" style="left:1265px;top:878px;width:29px;height:25px;background:#f0f0f0;border:1px solid #222"></div>
<div class="ab" style="left:1293px;top:878px;width:146px;height:25px;background:#0078d7;border:1px solid #555"></div>
<div class="t" style="left:1274.00px;top:884.74px;font-size:14.7px;font-family:'Liberation Mono', monospace;font-weight:normal;color:#000;">7</div>
<div class="t" style="left:1298.00px;top:884.74px;font-size:14.7px;font-family:'Liberation Mono', monospace;font-weight:normal;color:#fff;">105</div>
<div class="ab" style="left:1265px;top:902px;width:29px;height:25px;background:#f0f0f0;border:1px solid #222"></div>
<div class="ab" style="left:1293px;top:902px;width:146px;height:25px;background:#eff0fa;border:1px solid #555"></div>
<div class="t" style="left:1274.00px;top:908.74px;font-size:14.7px;font-family:'Liberation Mono', monospace;font-weight:normal;color:#000;">8</div>
<div class="t" style="left:1298.00px;top:908.74px;font-size:14.7px;font-family:'Liberation Mono', monospace;font-weight:normal;color:#000;">2</div>
<div class="ab" style="left:1265px;top:926px;width:29px;height:25px;background:#f0f0f0;border:1px solid #222"></div>
<div class="ab" style="left:1293px;top:926px;width:146px;height:25px;background:#ffffff;border:1px solid #555"></div>
<div class="t" style="left:1274.00px;top:932.74px;font-size:14.7px;font-family:'Liberation Mono', monospace;font-weight:normal;color:#000;">9</div>
<div class="t" style="left:1298.00px;top:932.74px;font-size:14.7px;font-family:'Liberation Mono', monospace;font-weight:normal;color:#000;">1</div>
<div class="ab" style="left:4px;top:38px;width:805px;height:1232px;background:#f4f4f4;border:1px solid #8d949a"></div>
<div class="ab" style="left:9px;top:43px;width:795px;height:1221px;background:#4a4a4e"></div>
<div class="ab" style="left:9px;top:43px;width:795px;height:28px;background:linear-gradient(#545457 0%,#4a4a4d 38%,#1e2022 50%,#26282a 75%,#303234 100%)"></div>
<div class="ab" style="left:9px;top:71px;width:795px;height:1px;background:#000"></div>
<svg class="ab" style="left:12px;top:45px" width="23" height="22" viewBox="0 0 23 22"><path d="M9 4.7H15.4V1.5L21 7L15.4 12.4V8.9H9Z" fill="#d0d0d0"/><path d="M12.2 12H6.6V8.5L1 13.8L6.6 19.8V16H12.2Z" fill="#c2c2c2"/></svg>
<div class="t" style="left:36.00px;top:47.88px;font-size:15.5px;font-family:'Liberation Sans', sans-serif;font-weight:normal;color:#fff;transform:scaleX(1.0067);transform-origin:left 0;">I/O Map</div>
<svg class="ab" style="left:645px;top:47px" width="100" height="20" viewBox="0 0 100 20" opacity="0.22"><g stroke="#777" stroke-width="1.5" fill="none"><rect x="4" y="3" width="12" height="12"/><circle cx="33" cy="8" r="5"/><path d="M37 12L41 16"/><circle cx="58" cy="8" r="5"/><path d="M62 12L66 16"/><circle cx="84" cy="11" r="4"/><path d="M87 14L90 17"/></g></svg>
<svg class="ab" style="left:747px;top:56px" width="12" height="7"><path d="M0.5 0.5H11.5L6 6.5Z" fill="#fff"/></svg>
<div class="ab" style="left:768px;top:51px;width:11px;height:11px;border:1.5px solid #fff;border-top-width:3px"></div>
<svg class="ab" style="left:787px;top:51px" width="12" height="12"><path d="M1 1L11 11M11 1L1 11" stroke="#fff" stroke-width="1.8"/></svg>
<div class="ab" style="left:10px;top:72px;width:773px;height:18px;background:#3b3b40"></div>
<div class="ab" style="left:10px;top:72px;width:25px;height:18px;background:#333334"></div>
<div class="ab" style="left:783px;top:72px;width:20px;height:18px;background:#444349"></div>
<div class="ab" style="left:109px;top:72px;width:1px;height:18px;background:#b8b8b8"></div>
<div class="ab" style="left:422px;top:72px;width:1px;height:18px;background:#b8b8b8"></div>
<div class="ab" style="left:503px;top:72px;width:1px;height:18px;background:#b8b8b8"></div>
<div class="ab" style="left:590px;top:72px;width:1px;height:18px;background:#b8b8b8"></div>
<div class="ab" style="left:711px;top:72px;width:1px;height:18px;background:#b8b8b8"></div>
<div class="t" style="left:46.03px;top:72.64px;font-size:14.6px;font-family:'Liberation Sans', sans-serif;font-weight:normal;color:#fff;">Position</div>
<div class="t" style="left:252.61px;top:72.64px;font-size:14.6px;font-family:'Liberation Sans', sans-serif;font-weight:normal;color:#fff;transform:scaleX(1.0831);transform-origin:center 0;">Port</div>
<div class="t" style="left:448.81px;top:72.64px;font-size:14.6px;font-family:'Liberation Sans', sans-serif;font-weight:normal;color:#fff;">R/W</div>
<div class="t" style="left:513.32px;top:72.64px;font-size:14.6px;font-family:'Liberation Sans', sans-serif;font-weight:normal;color:#fff;transform:scaleX(0.9651);transform-origin:center 0;">Data Type</div>
<div class="t" style="left:632.33px;top:72.64px;font-size:14.6px;font-family:'Liberation Sans', sans-serif;font-weight:normal;color:#fff;transform:scaleX(0.9534);transform-origin:center 0;">Value</div>
<div class="ab" style="left:10px;top:90px;width:25px;height:22px;background:#3a3a3e"></div>
<div class="ab" style="left:10px;top:111px;width:25px;height:1px;background:#a9a9a9"></div>
<div class="ab" style="left:35px;top:90px;width:748px;height:22px;background:#5b5a5f"></div>
<div class="ab" style="left:109px;top:90px;width:1px;height:22px;background:#000"></div>
<div class="ab" style="left:422px;top:90px;width:1px;height:22px;background:#000"></div>
<div class="ab" style="left:503px;top:90px;width:1px;height:22px;background:#000"></div>
<div class="ab" style="left:590px;top:90px;width:1px;height:22px;background:#000"></div>
<div class="ab" style="left:711px;top:90px;width:1px;height:22px;background:#000"></div>
<div class="t" style="left:171.00px;top:93.30px;font-size:15px;font-family:'Liberation Sans', sans-serif;font-weight:normal;color:#fff;transform:scaleX(0.9250);transform-origin:left 0;">1. RxPDO_1 Byte Out (0)_2000_01</div>
<div class="t" style="left:424.00px;top:93.30px;font-size:15px;font-family:'Liberation Sans', sans-serif;font-weight:normal;color:#fff;">W</div>
<div class="t" style="left:505.00px;top:93.30px;font-size:15px;font-family:'Liberation Sans', sans-serif;font-weight:normal;color:#fff;transform:scaleX(0.8168);transform-origin:left 0;">BYTE</div>
<div class="ab" style="left:592px;top:91px;width:118px;height:20px;background:#fff;box-shadow:inset 0 1px 0 #d8d8d8"></div>
<div class="t" style="left:593.00px;top:92.30px;font-size:15px;font-family:'Liberation Sans', sans-serif;font-weight:normal;color:#000;transform:scaleX(0.9000);transform-origin:left 0;">0</div>
<div class="ab" style="left:10px;top:112px;width:25px;height:23px;background:#3a3a3e"></div>
<div class="ab" style="left:10px;top:134px;width:25px;height:1px;background:#a9a9a9"></div>
<div class="ab" style="left:35px;top:112px;width:748px;height:23px;background:#4b4b4f"></div>
<div class="ab" style="left:109px;top:112px;width:1px;height:23px;background:#000"></div>
<div class="ab" style="left:422px;top:112px;width:1px;height:23px;background:#000"></div>
<div class="ab" style="left:503px;top:112px;width:1px;height:23px;background:#000"></div>
<div class="ab" style="left:590px;top:112px;width:1px;height:23px;background:#000"></div>
<div class="ab" style="left:711px;top:112px;width:1px;height:23px;background:#000"></div>
<div class="t" style="left:171.00px;top:115.30px;font-size:15px;font-family:'Liberation Sans', sans-serif;font-weight:normal;color:#fff;transform:scaleX(0.9250);transform-origin:left 0;">1. RxPDO_1 Byte Out (1)_2000_02</div>
<div class="t" style="left:424.00px;top:115.30px;font-size:15px;font-family:'Liberation Sans', sans-serif;font-weight:normal;color:#fff;">W</div>
<div class="t" style="left:505.00px;top:115.30px;font-size:15px;font-family:'Liberation Sans', sans-serif;font-weight:normal;color:#fff;transform:scaleX(0.8168);transform-origin:left 0;">BYTE</div>
<div class="ab" style="left:592px;top:113px;width:118px;height:21px;background:#fff;box-shadow:inset 0 1px 0 #d8d8d8"></div>
<div class="t" style="left:593.00px;top:114.30px;font-size:15px;font-family:'Liberation Sans', sans-serif;font-weight:normal;color:#000;transform:scaleX(0.9000);transform-origin:left 0;">0</div>
<div class="ab" style="left:10px;top:135px;width:25px;height:22px;background:#3a3a3e"></div>
<div class="ab" style="left:10px;top:156px;width:25px;height:1px;background:#a9a9a9"></div>
<div class="ab" style="left:35px;top:135px;width:748px;height:22px;background:#5b5a5f"></div>
<div class="ab" style="left:109px;top:135px;width:1px;height:22px;background:#000"></div>
<div class="ab" style="left:422px;top:135px;width:1px;height:22px;background:#000"></div>
<div class="ab" style="left:503px;top:135px;width:1px;height:22px;background:#000"></div>
<div class="ab" style="left:590px;top:135px;width:1px;height:22px;background:#000"></div>
<div class="ab" style="left:711px;top:135px;width:1px;height:22px;background:#000"></div>
<div class="t" style="left:171.00px;top:138.30px;font-size:15px;font-family:'Liberation Sans', sans-serif;font-weight:normal;color:#fff;transform:scaleX(0.9250);transform-origin:left 0;">1. RxPDO_1 Byte Out (2)_2000_03</div>
<div class="t" style="left:424.00px;top:138.30px;font-size:15px;font-family:'Liberation Sans', sans-serif;font-weight:normal;color:#fff;">W</div>
<div class="t" style="left:505.00px;top:138.30px;font-size:15px;font-family:'Liberation Sans', sans-serif;font-weight:normal;color:#fff;transform:scaleX(0.8168);transform-origin:left 0;">BYTE</div>
<div class="ab" style="left:592px;top:136px;width:118px;height:20px;background:#fff;box-shadow:inset 0 1px 0 #d8d8d8"></div>
<div class="t" style="left:593.00px;top:137.30px;font-size:15px;font-family:'Liberation Sans', sans-serif;font-weight:normal;color:#000;transform:scaleX(0.9000);transform-origin:left 0;">0</div>
<div class="ab" style="left:10px;top:157px;width:25px;height:23px;background:#3a3a3e"></div>
<div class="ab" style="left:10px;top:179px;width:25px;height:1px;background:#a9a9a9"></div>
<div class="ab" style="left:35px;top:157px;width:748px;height:23px;background:#4b4b4f"></div>
<div class="ab" style="left:109px;top:157px;width:1px;height:23px;background:#000"></div>
<div class="ab" style="left:422px;top:157px;width:1px;height:23px;background:#000"></div>
<div class="ab" style="left:503px;top:157px;width:1px;height:23px;background:#000"></div>
<div class="ab" style="left:590px;top:157px;width:1px;height:23px;background:#000"></div>
<div class="ab" style="left:711px;top:157px;width:1px;height:23px;background:#000"></div>
<div class="t" style="left:171.00px;top:160.30px;font-size:15px;font-family:'Liberation Sans', sans-serif;font-weight:normal;color:#fff;transform:scaleX(0.9250);transform-origin:left 0;">1. RxPDO_1 Byte Out (3)_2000_04</div>
<div class="t" style="left:424.00px;top:160.30px;font-size:15px;font-family:'Liberation Sans', sans-serif;font-weight:normal;color:#fff;">W</div>
<div class="t" style="left:505.00px;top:160.30px;font-size:15px;font-family:'Liberation Sans', sans-serif;font-weight:normal;color:#fff;transform:scaleX(0.8168);transform-origin:left 0;">BYTE</div>
<div class="ab" style="left:592px;top:158px;width:118px;height:21px;background:#fff;box-shadow:inset 0 1px 0 #d8d8d8"></div>
<div class="t" style="left:593.00px;top:159.30px;font-size:15px;font-family:'Liberation Sans', sans-serif;font-weight:normal;color:#000;transform:scaleX(0.9000);transform-origin:left 0;">0</div>
<div class="ab" style="left:10px;top:180px;width:25px;height:22px;background:#3a3a3e"></div>
<div class="ab" style="left:10px;top:201px;width:25px;height:1px;background:#a9a9a9"></div>
<div class="ab" style="left:35px;top:180px;width:748px;height:22px;background:#5b5a5f"></div>
<div class="ab" style="left:109px;top:180px;width:1px;height:22px;background:#000"></div>
<div class="ab" style="left:422px;top:180px;width:1px;height:22px;background:#000"></div>
<div class="ab" style="left:503px;top:180px;width:1px;height:22px;background:#000"></div>
<div class="ab" style="left:590px;top:180px;width:1px;height:22px;background:#000"></div>
<div class="ab" style="left:711px;top:180px;width:1px;height:22px;background:#000"></div>
<div class="t" style="left:171.00px;top:183.30px;font-size:15px;font-family:'Liberation Sans', sans-serif;font-weight:normal;color:#fff;transform:scaleX(0.9250);transform-origin:left 0;">1. RxPDO_1 Byte Out (4)_2000_05</div>
<div class="t" style="left:424.00px;top:183.30px;font-size:15px;font-family:'Liberation Sans', sans-serif;font-weight:normal;color:#fff;">W</div>
<div class="t" style="left:505.00px;top:183.30px;font-size:15px;font-family:'Liberation Sans', sans-serif;font-weight:normal;color:#fff;transform:scaleX(0.8168);transform-origin:left 0;">BYTE</div>
<div class="ab" style="left:592px;top:181px;width:118px;height:20px;background:#fff;box-shadow:inset 0 1px 0 #d8d8d8"></div>
<div class="t" style="left:593.00px;top:182.30px;font-size:15px;font-family:'Liberation Sans', sans-serif;font-weight:normal;color:#000;transform:scaleX(0.9000);transform-origin:left 0;">0</div>
<div class="ab" style="left:10px;top:202px;width:25px;height:23px;background:#3a3a3e"></div>
<div class="ab" style="left:10px;top:224px;width:25px;height:1px;background:#a9a9a9"></div>
<div class="ab" style="left:35px;top:202px;width:748px;height:23px;background:#4b4b4f"></div>
<div class="ab" style="left:109px;top:202px;width:1px;height:23px;background:#000"></div>
<div class="ab" style="left:422px;top:202px;width:1px;height:23px;background:#000"></div>
<div class="ab" style="left:503px;top:202px;width:1px;height:23px;background:#000"></div>
<div class="ab" style="left:590px;top:202px;width:1px;height:23px;background:#000"></div>
<div class="ab" style="left:711px;top:202px;width:1px;height:23px;background:#000"></div>
<div class="t" style="left:171.00px;top:205.30px;font-size:15px;font-family:'Liberation Sans', sans-serif;font-weight:normal;color:#fff;transform:scaleX(0.9250);transform-origin:left 0;">1. RxPDO_1 Byte Out (5)_2000_06</div>
<div class="t" style="left:424.00px;top:205.30px;font-size:15px;font-family:'Liberation Sans', sans-serif;font-weight:normal;color:#fff;">W</div>
<div class="t" style="left:505.00px;top:205.30px;font-size:15px;font-family:'Liberation Sans', sans-serif;font-weight:normal;color:#fff;transform:scaleX(0.8168);transform-origin:left 0;">BYTE</div>
<div class="ab" style="left:592px;top:203px;width:118px;height:21px;background:#fff;box-shadow:inset 0 1px 0 #d8d8d8"></div>
<div class="t" style="left:593.00px;top:204.30px;font-size:15px;font-family:'Liberation Sans', sans-serif;font-weight:normal;color:#000;transform:scaleX(0.9000);transform-origin:left 0;">0</div>
<div class="ab" style="left:10px;top:225px;width:25px;height:22px;background:#3a3a3e"></div>
<div class="ab" style="left:10px;top:246px;width:25px;height:1px;background:#a9a9a9"></div>
<div class="ab" style="left:35px;top:225px;width:748px;height:22px;background:#5b5a5f"></div>
<div class="ab" style="left:109px;top:225px;width:1px;height:22px;background:#000"></div>
<div class="ab" style="left:422px;top:225px;width:1px;height:22px;background:#000"></div>
<div class="ab" style="left:503px;top:225px;width:1px;height:22px;background:#000"></div>
<div class="ab" style="left:590px;top:225px;width:1px;height:22px;background:#000"></div>
<div class="ab" style="left:711px;top:225px;width:1px;height:22px;background:#000"></div>
<div class="t" style="left:171.00px;top:228.30px;font-size:15px;font-family:'Liberation Sans', sans-serif;font-weight:normal;color:#fff;transform:scaleX(0.9250);transform-origin:left 0;">1. RxPDO_1 Byte Out (6)_2000_07</div>
<div class="t" style="left:424.00px;top:228.30px;font-size:15px;font-family:'Liberation Sans', sans-serif;font-weight:normal;color:#fff;">W</div>
<div class="t" style="left:505.00px;top:228.30px;font-size:15px;font-family:'Liberation Sans', sans-serif;font-weight:normal;color:#fff;transform:scaleX(0.8168);transform-origin:left 0;">BYTE</div>
<div class="ab" style="left:592px;top:226px;width:118px;height:20px;background:#fff;box-shadow:inset 0 1px 0 #d8d8d8"></div>
<div class="t" style="left:593.00px;top:227.30px;font-size:15px;font-family:'Liberation Sans', sans-serif;font-weight:normal;color:#000;transform:scaleX(0.9000);transform-origin:left 0;">2</div>
<div class="ab" style="left:10px;top:247px;width:25px;height:23px;background:#3a3a3e"></div>
<div class="ab" style="left:10px;top:269px;width:25px;height:1px;background:#a9a9a9"></div>
<div class="ab" style="left:35px;top:247px;width:748px;height:23px;background:#4b4b4f"></div>
<div class="ab" style="left:109px;top:247px;width:1px;height:23px;background:#000"></div>
<div class="ab" style="left:422px;top:247px;width:1px;height:23px;background:#000"></div>
<div class="ab" style="left:503px;top:247px;width:1px;height:23px;background:#000"></div>
<div class="ab" style="left:590px;top:247px;width:1px;height:23px;background:#000"></div>
<div class="ab" style="left:711px;top:247px;width:1px;height:23px;background:#000"></div>
<div class="t" style="left:171.00px;top:250.30px;font-size:15px;font-family:'Liberation Sans', sans-serif;font-weight:normal;color:#fff;transform:scaleX(0.9250);transform-origin:left 0;">1. RxPDO_1 Byte Out (7)_2000_08</div>
<div class="t" style="left:424.00px;top:250.30px;font-size:15px;font-family:'Liberation Sans', sans-serif;font-weight:normal;color:#fff;">W</div>
<div class="t" style="left:505.00px;top:250.30px;font-size:15px;font-family:'Liberation Sans', sans-serif;font-weight:normal;color:#fff;transform:scaleX(0.8168);transform-origin:left 0;">BYTE</div>
<div class="ab" style="left:592px;top:248px;width:118px;height:21px;background:#fff;box-shadow:inset 0 1px 0 #d8d8d8"></div>
<div class="t" style="left:593.00px;top:249.30px;font-size:15px;font-family:'Liberation Sans', sans-serif;font-weight:normal;color:#000;transform:scaleX(0.9000);transform-origin:left 0;">1</div>
<div class="ab" style="left:10px;top:270px;width:25px;height:23px;background:#3a3a3e"></div>
<div class="ab" style="left:10px;top:292px;width:25px;height:1px;background:#a9a9a9"></div>
<div class="ab" style="left:35px;top:270px;width:748px;height:23px;background:#5b5a5f"></div>
<div class="ab" style="left:109px;top:270px;width:1px;height:23px;background:#000"></div>
<div class="ab" style="left:422px;top:270px;width:1px;height:23px;background:#000"></div>
<div class="ab" style="left:503px;top:270px;width:1px;height:23px;background:#000"></div>
<div class="ab" style="left:590px;top:270px;width:1px;height:23px;background:#000"></div>
<div class="ab" style="left:711px;top:270px;width:1px;height:23px;background:#000"></div>
<div class="t" style="left:171.00px;top:273.30px;font-size:15px;font-family:'Liberation Sans', sans-serif;font-weight:normal;color:#fff;transform:scaleX(0.9250);transform-origin:left 0;">1. RxPDO_1 Byte Out (8)_2000_09</div>
<div class="t" style="left:424.00px;top:273.30px;font-size:15px;font-family:'Liberation Sans', sans-serif;font-weight:normal;color:#fff;">W</div>
<div class="t" style="left:505.00px;top:273.30px;font-size:15px;font-family:'Liberation Sans', sans-serif;font-weight:normal;color:#fff;transform:scaleX(0.8168);transform-origin:left 0;">BYTE</div>
<div class="ab" style="left:592px;top:271px;width:118px;height:21px;background:#fff;box-shadow:inset 0 1px 0 #d8d8d8"></div>
<div class="t" style="left:593.00px;top:272.30px;font-size:15px;font-family:'Liberation Sans', sans-serif;font-weight:normal;color:#000;transform:scaleX(0.9000);transform-origin:left 0;">&#160;0</div>
<div class="ab" style="left:10px;top:293px;width:25px;height:23px;background:#3a3a3e"></div>
<div class="ab" style="left:10px;top:315px;width:25px;height:1px;background:#a9a9a9"></div>
<div class="ab" style="left:35px;top:293px;width:748px;height:23px;background:#4b4b4f"></div>
<div class="ab" style="left:109px;top:293px;width:1px;height:23px;background:#000"></div>
<div class="ab" style="left:422px;top:293px;width:1px;height:23px;background:#000"></div>
<div class="ab" style="left:503px;top:293px;width:1px;height:23px;background:#000"></div>
<div class="ab" style="left:590px;top:293px;width:1px;height:23px;background:#000"></div>
<div class="ab" style="left:711px;top:293px;width:1px;height:23px;background:#000"></div>
<div class="t" style="left:171.00px;top:296.30px;font-size:15px;font-family:'Liberation Sans', sans-serif;font-weight:normal;color:#fff;transform:scaleX(0.9250);transform-origin:left 0;">1. RxPDO_1 Byte Out (9)_2000_0A</div>
<div class="t" style="left:424.00px;top:296.30px;font-size:15px;font-family:'Liberation Sans', sans-serif;font-weight:normal;color:#fff;">W</div>
<div class="t" style="left:505.00px;top:296.30px;font-size:15px;font-family:'Liberation Sans', sans-serif;font-weight:normal;color:#fff;transform:scaleX(0.8168);transform-origin:left 0;">BYTE</div>
<div class="ab" style="left:592px;top:294px;width:118px;height:21px;background:#fff;box-shadow:inset 0 1px 0 #d8d8d8"></div>
<div class="t" style="left:593.00px;top:295.30px;font-size:15px;font-family:'Liberation Sans', sans-serif;font-weight:normal;color:#000;transform:scaleX(0.9000);transform-origin:left 0;">&#160;1</div>
<div class="ab" style="left:10px;top:316px;width:25px;height:22px;background:#3a3a3e"></div>
<div class="ab" style="left:10px;top:337px;width:25px;height:1px;background:#a9a9a9"></div>
<div class="ab" style="left:35px;top:316px;width:748px;height:22px;background:#5b5a5f"></div>
<div class="ab" style="left:109px;top:316px;width:1px;height:22px;background:#000"></div>
<div class="ab" style="left:422px;top:316px;width:1px;height:22px;background:#000"></div>
<div class="ab" style="left:503px;top:316px;width:1px;height:22px;background:#000"></div>
<div class="ab" style="left:590px;top:316px;width:1px;height:22px;background:#000"></div>
<div class="ab" style="left:711px;top:316px;width:1px;height:22px;background:#000"></div>
<div class="t" style="left:171.00px;top:319.30px;font-size:15px;font-family:'Liberation Sans', sans-serif;font-weight:normal;color:#fff;transform:scaleX(0.9250);transform-origin:left 0;">1. RxPDO_1 Byte Out (10)_2000_0B</div>
<div class="t" style="left:424.00px;top:319.30px;font-size:15px;font-family:'Liberation Sans', sans-serif;font-weight:normal;color:#fff;">W</div>
<div class="t" style="left:505.00px;top:319.30px;font-size:15px;font-family:'Liberation Sans', sans-serif;font-weight:normal;color:#fff;transform:scaleX(0.8168);transform-origin:left 0;">BYTE</div>
<div class="ab" style="left:592px;top:317px;width:118px;height:20px;background:#fff;box-shadow:inset 0 1px 0 #d8d8d8"></div>
<div class="t" style="left:593.00px;top:318.30px;font-size:15px;font-family:'Liberation Sans', sans-serif;font-weight:normal;color:#000;transform:scaleX(0.9000);transform-origin:left 0;">0</div>
<div class="ab" style="left:10px;top:338px;width:25px;height:23px;background:#3a3a3e"></div>
<div class="ab" style="left:10px;top:360px;width:25px;height:1px;background:#a9a9a9"></div>
<div class="ab" style="left:35px;top:338px;width:748px;height:23px;background:#4b4b4f"></div>
<div class="ab" style="left:109px;top:338px;width:1px;height:23px;background:#000"></div>
<div class="ab" style="left:422px;top:338px;width:1px;height:23px;background:#000"></div>
<div class="ab" style="left:503px;top:338px;width:1px;height:23px;background:#000"></div>
<div class="ab" style="left:590px;top:338px;width:1px;height:23px;background:#000"></div>
<div class="ab" style="left:711px;top:338px;width:1px;height:23px;background:#000"></div>
<div class="t" style="left:171.00px;top:341.30px;font-size:15px;font-family:'Liberation Sans', sans-serif;font-weight:normal;color:#fff;transform:scaleX(0.9250);transform-origin:left 0;">1. RxPDO_1 Byte Out (11)_2000_0C</div>
<div class="t" style="left:424.00px;top:341.30px;font-size:15px;font-family:'Liberation Sans', sans-serif;font-weight:normal;color:#fff;">W</div>
<div class="t" style="left:505.00px;top:341.30px;font-size:15px;font-family:'Liberation Sans', sans-serif;font-weight:normal;color:#fff;transform:scaleX(0.8168);transform-origin:left 0;">BYTE</div>
<div class="ab" style="left:592px;top:339px;width:118px;height:21px;background:#fff;box-shadow:inset 0 1px 0 #d8d8d8"></div>
<div class="t" style="left:593.00px;top:340.30px;font-size:15px;font-family:'Liberation Sans', sans-serif;font-weight:normal;color:#000;transform:scaleX(0.9000);transform-origin:left 0;">0</div>
<div class="ab" style="left:10px;top:361px;width:25px;height:22px;background:#3a3a3e"></div>
<div class="ab" style="left:10px;top:382px;width:25px;height:1px;background:#a9a9a9"></div>
<div class="ab" style="left:35px;top:361px;width:748px;height:22px;background:#5b5a5f"></div>
<div class="ab" style="left:109px;top:361px;width:1px;height:22px;background:#000"></div>
<div class="ab" style="left:422px;top:361px;width:1px;height:22px;background:#000"></div>
<div class="ab" style="left:503px;top:361px;width:1px;height:22px;background:#000"></div>
<div class="ab" style="left:590px;top:361px;width:1px;height:22px;background:#000"></div>
<div class="ab" style="left:711px;top:361px;width:1px;height:22px;background:#000"></div>
<div class="t" style="left:171.00px;top:364.30px;font-size:15px;font-family:'Liberation Sans', sans-serif;font-weight:normal;color:#fff;transform:scaleX(0.9250);transform-origin:left 0;">1. RxPDO_1 Byte Out (12)_2000_0D</div>
<div class="t" style="left:424.00px;top:364.30px;font-size:15px;font-family:'Liberation Sans', sans-serif;font-weight:normal;color:#fff;">W</div>
<div class="t" style="left:505.00px;top:364.30px;font-size:15px;font-family:'Liberation Sans', sans-serif;font-weight:normal;color:#fff;transform:scaleX(0.8168);transform-origin:left 0;">BYTE</div>
<div class="ab" style="left:592px;top:362px;width:118px;height:20px;background:#fff;box-shadow:inset 0 1px 0 #d8d8d8"></div>
<div class="t" style="left:593.00px;top:363.30px;font-size:15px;font-family:'Liberation Sans', sans-serif;font-weight:normal;color:#000;transform:scaleX(0.9000);transform-origin:left 0;">4</div>
<div class="ab" style="left:10px;top:383px;width:25px;height:23px;background:#3a3a3e"></div>
<div class="ab" style="left:10px;top:405px;width:25px;height:1px;background:#a9a9a9"></div>
<div class="ab" style="left:35px;top:383px;width:748px;height:23px;background:#4b4b4f"></div>
<div class="ab" style="left:109px;top:383px;width:1px;height:23px;background:#000"></div>
<div class="ab" style="left:422px;top:383px;width:1px;height:23px;background:#000"></div>
<div class="ab" style="left:503px;top:383px;width:1px;height:23px;background:#000"></div>
<div class="ab" style="left:590px;top:383px;width:1px;height:23px;background:#000"></div>
<div class="ab" style="left:711px;top:383px;width:1px;height:23px;background:#000"></div>
<div class="t" style="left:171.00px;top:386.30px;font-size:15px;font-family:'Liberation Sans', sans-serif;font-weight:normal;color:#fff;transform:scaleX(0.9250);transform-origin:left 0;">1. RxPDO_1 Byte Out (13)_2000_0E</div>
<div class="t" style="left:424.00px;top:386.30px;font-size:15px;font-family:'Liberation Sans', sans-serif;font-weight:normal;color:#fff;">W</div>
<div class="t" style="left:505.00px;top:386.30px;font-size:15px;font-family:'Liberation Sans', sans-serif;font-weight:normal;color:#fff;transform:scaleX(0.8168);transform-origin:left 0;">BYTE</div>
<div class="ab" style="left:592px;top:384px;width:118px;height:21px;background:#fff;box-shadow:inset 0 1px 0 #d8d8d8"></div>
<div class="t" style="left:593.00px;top:385.30px;font-size:15px;font-family:'Liberation Sans', sans-serif;font-weight:normal;color:#000;transform:scaleX(0.9000);transform-origin:left 0;">0</div>
<div class="ab" style="left:10px;top:406px;width:25px;height:22px;background:#3a3a3e"></div>
<div class="ab" style="left:10px;top:427px;width:25px;height:1px;background:#a9a9a9"></div>
<div class="ab" style="left:35px;top:406px;width:748px;height:22px;background:#5b5a5f"></div>
<div class="ab" style="left:109px;top:406px;width:1px;height:22px;background:#000"></div>
<div class="ab" style="left:422px;top:406px;width:1px;height:22px;background:#000"></div>
<div class="ab" style="left:503px;top:406px;width:1px;height:22px;background:#000"></div>
<div class="ab" style="left:590px;top:406px;width:1px;height:22px;background:#000"></div>
<div class="ab" style="left:711px;top:406px;width:1px;height:22px;background:#000"></div>
<div class="t" style="left:171.00px;top:409.30px;font-size:15px;font-family:'Liberation Sans', sans-serif;font-weight:normal;color:#fff;transform:scaleX(0.9250);transform-origin:left 0;">1. RxPDO_1 Byte Out (14)_2000_0F</div>
<div class="t" style="left:424.00px;top:409.30px;font-size:15px;font-family:'Liberation Sans', sans-serif;font-weight:normal;color:#fff;">W</div>
<div class="t" style="left:505.00px;top:409.30px;font-size:15px;font-family:'Liberation Sans', sans-serif;font-weight:normal;color:#fff;transform:scaleX(0.8168);transform-origin:left 0;">BYTE</div>
<div class="ab" style="left:592px;top:407px;width:118px;height:20px;background:#fff;box-shadow:inset 0 1px 0 #d8d8d8"></div>
<div class="t" style="left:593.00px;top:408.30px;font-size:15px;font-family:'Liberation Sans', sans-serif;font-weight:normal;color:#000;transform:scaleX(0.9000);transform-origin:left 0;">7</div>
<div class="ab" style="left:10px;top:428px;width:25px;height:23px;background:#3a3a3e"></div>
<div class="ab" style="left:10px;top:450px;width:25px;height:1px;background:#a9a9a9"></div>
<div class="ab" style="left:35px;top:428px;width:748px;height:23px;background:#4b4b4f"></div>
<div class="ab" style="left:109px;top:428px;width:1px;height:23px;background:#000"></div>
<div class="ab" style="left:422px;top:428px;width:1px;height:23px;background:#000"></div>
<div class="ab" style="left:503px;top:428px;width:1px;height:23px;background:#000"></div>
<div class="ab" style="left:590px;top:428px;width:1px;height:23px;background:#000"></div>
<div class="ab" style="left:711px;top:428px;width:1px;height:23px;background:#000"></div>
<div class="t" style="left:171.00px;top:431.30px;font-size:15px;font-family:'Liberation Sans', sans-serif;font-weight:normal;color:#fff;transform:scaleX(0.9250);transform-origin:left 0;">1. RxPDO_1 Byte Out (15)_2000_10</div>
<div class="t" style="left:424.00px;top:431.30px;font-size:15px;font-family:'Liberation Sans', sans-serif;font-weight:normal;color:#fff;">W</div>
<div class="t" style="left:505.00px;top:431.30px;font-size:15px;font-family:'Liberation Sans', sans-serif;font-weight:normal;color:#fff;transform:scaleX(0.8168);transform-origin:left 0;">BYTE</div>
<div class="ab" style="left:592px;top:429px;width:118px;height:21px;background:#fff;box-shadow:inset 0 1px 0 #d8d8d8"></div>
<div class="t" style="left:593.00px;top:430.30px;font-size:15px;font-family:'Liberation Sans', sans-serif;font-weight:normal;color:#000;transform:scaleX(0.9000);transform-origin:left 0;">0</div>
<div class="ab" style="left:10px;top:451px;width:25px;height:23px;background:#3a3a3e"></div>
<div class="ab" style="left:10px;top:473px;width:25px;height:1px;background:#a9a9a9"></div>
<div class="ab" style="left:35px;top:451px;width:748px;height:23px;background:#5b5a5f"></div>
<div class="ab" style="left:109px;top:451px;width:1px;height:23px;background:#000"></div>
<div class="ab" style="left:422px;top:451px;width:1px;height:23px;background:#000"></div>
<div class="ab" style="left:503px;top:451px;width:1px;height:23px;background:#000"></div>
<div class="ab" style="left:590px;top:451px;width:1px;height:23px;background:#000"></div>
<div class="ab" style="left:711px;top:451px;width:1px;height:23px;background:#000"></div>
<div class="t" style="left:171.00px;top:454.30px;font-size:15px;font-family:'Liberation Sans', sans-serif;font-weight:normal;color:#fff;transform:scaleX(0.9250);transform-origin:left 0;">1. RxPDO_1 Byte Out (16)_2000_11</div>
<div class="t" style="left:424.00px;top:454.30px;font-size:15px;font-family:'Liberation Sans', sans-serif;font-weight:normal;color:#fff;">W</div>
<div class="t" style="left:505.00px;top:454.30px;font-size:15px;font-family:'Liberation Sans', sans-serif;font-weight:normal;color:#fff;transform:scaleX(0.8168);transform-origin:left 0;">BYTE</div>
<div class="ab" style="left:592px;top:452px;width:118px;height:21px;background:#fff;box-shadow:inset 0 1px 0 #d8d8d8"></div>
<div class="t" style="left:593.00px;top:453.30px;font-size:15px;font-family:'Liberation Sans', sans-serif;font-weight:normal;color:#000;transform:scaleX(0.9000);transform-origin:left 0;">&#160;12</div>
<div class="ab" style="left:10px;top:474px;width:25px;height:23px;background:#3a3a3e"></div>
<div class="ab" style="left:10px;top:496px;width:25px;height:1px;background:#a9a9a9"></div>
<div class="ab" style="left:35px;top:474px;width:748px;height:23px;background:#4b4b4f"></div>
<div class="ab" style="left:109px;top:474px;width:1px;height:23px;background:#000"></div>
<div class="ab" style="left:422px;top:474px;width:1px;height:23px;background:#000"></div>
<div class="ab" style="left:503px;top:474px;width:1px;height:23px;background:#000"></div>
<div class="ab" style="left:590px;top:474px;width:1px;height:23px;background:#000"></div>
<div class="ab" style="left:711px;top:474px;width:1px;height:23px;background:#000"></div>
<div class="t" style="left:171.00px;top:477.30px;font-size:15px;font-family:'Liberation Sans', sans-serif;font-weight:normal;color:#fff;transform:scaleX(0.9250);transform-origin:left 0;">1. RxPDO_1 Byte Out (17)_2000_12</div>
<div class="t" style="left:424.00px;top:477.30px;font-size:15px;font-family:'Liberation Sans', sans-serif;font-weight:normal;color:#fff;">W</div>
<div class="t" style="left:505.00px;top:477.30px;font-size:15px;font-family:'Liberation Sans', sans-serif;font-weight:normal;color:#fff;transform:scaleX(0.8168);transform-origin:left 0;">BYTE</div>
<div class="ab" style="left:592px;top:475px;width:118px;height:21px;background:#fff;box-shadow:inset 0 1px 0 #d8d8d8"></div>
<div class="t" style="left:593.00px;top:476.30px;font-size:15px;font-family:'Liberation Sans', sans-serif;font-weight:normal;color:#000;transform:scaleX(0.9000);transform-origin:left 0;">&#160;21</div>
<div class="ab" style="left:10px;top:497px;width:25px;height:23px;background:#3a3a3e"></div>
<div class="ab" style="left:10px;top:519px;width:25px;height:1px;background:#a9a9a9"></div>
<div class="ab" style="left:35px;top:497px;width:748px;height:23px;background:#5b5a5f"></div>
<div class="ab" style="left:109px;top:497px;width:1px;height:23px;background:#000"></div>
<div class="ab" style="left:422px;top:497px;width:1px;height:23px;background:#000"></div>
<div class="ab" style="left:503px;top:497px;width:1px;height:23px;background:#000"></div>
<div class="ab" style="left:590px;top:497px;width:1px;height:23px;background:#000"></div>
<div class="ab" style="left:711px;top:497px;width:1px;height:23px;background:#000"></div>
<div class="t" style="left:171.00px;top:500.30px;font-size:15px;font-family:'Liberation Sans', sans-serif;font-weight:normal;color:#fff;transform:scaleX(0.9250);transform-origin:left 0;">1. RxPDO_1 Byte Out (18)_2000_13</div>
<div class="t" style="left:424.00px;top:500.30px;font-size:15px;font-family:'Liberation Sans', sans-serif;font-weight:normal;color:#fff;">W</div>
<div class="t" style="left:505.00px;top:500.30px;font-size:15px;font-family:'Liberation Sans', sans-serif;font-weight:normal;color:#fff;transform:scaleX(0.8168);transform-origin:left 0;">BYTE</div>
<div class="ab" style="left:592px;top:498px;width:118px;height:21px;background:#fff;box-shadow:inset 0 1px 0 #d8d8d8"></div>
<div class="t" style="left:593.00px;top:499.30px;font-size:15px;font-family:'Liberation Sans', sans-serif;font-weight:normal;color:#000;transform:scaleX(0.9000);transform-origin:left 0;">&#160;31</div>
<div class="ab" style="left:10px;top:520px;width:25px;height:23px;background:#3a3a3e"></div>
<div class="ab" style="left:10px;top:542px;width:25px;height:1px;background:#a9a9a9"></div>
<div class="ab" style="left:35px;top:520px;width:748px;height:23px;background:#4b4b4f"></div>
<div class="ab" style="left:109px;top:520px;width:1px;height:23px;background:#000"></div>
<div class="ab" style="left:422px;top:520px;width:1px;height:23px;background:#000"></div>
<div class="ab" style="left:503px;top:520px;width:1px;height:23px;background:#000"></div>
<div class="ab" style="left:590px;top:520px;width:1px;height:23px;background:#000"></div>
<div class="ab" style="left:711px;top:520px;width:1px;height:23px;background:#000"></div>
<div class="t" style="left:171.00px;top:523.30px;font-size:15px;font-family:'Liberation Sans', sans-serif;font-weight:normal;color:#fff;transform:scaleX(0.9250);transform-origin:left 0;">1. RxPDO_1 Byte Out (19)_2000_14</div>
<div class="t" style="left:424.00px;top:523.30px;font-size:15px;font-family:'Liberation Sans', sans-serif;font-weight:normal;color:#fff;">W</div>
<div class="t" style="left:505.00px;top:523.30px;font-size:15px;font-family:'Liberation Sans', sans-serif;font-weight:normal;color:#fff;transform:scaleX(0.8168);transform-origin:left 0;">BYTE</div>
<div class="ab" style="left:592px;top:521px;width:118px;height:21px;background:#fff;box-shadow:inset 0 1px 0 #d8d8d8"></div>
<div class="t" style="left:593.00px;top:522.30px;font-size:15px;font-family:'Liberation Sans', sans-serif;font-weight:normal;color:#000;transform:scaleX(0.9000);transform-origin:left 0;">&#160;13</div>
<div class="ab" style="left:10px;top:543px;width:25px;height:22px;background:#3a3a3e"></div>
<div class="ab" style="left:10px;top:564px;width:25px;height:1px;background:#a9a9a9"></div>
<div class="ab" style="left:35px;top:543px;width:748px;height:22px;background:#5b5a5f"></div>
<div class="ab" style="left:109px;top:543px;width:1px;height:22px;background:#000"></div>
<div class="ab" style="left:422px;top:543px;width:1px;height:22px;background:#000"></div>
<div class="ab" style="left:503px;top:543px;width:1px;height:22px;background:#000"></div>
<div class="ab" style="left:590px;top:543px;width:1px;height:22px;background:#000"></div>
<div class="ab" style="left:711px;top:543px;width:1px;height:22px;background:#000"></div>
<div class="t" style="left:171.00px;top:546.30px;font-size:15px;font-family:'Liberation Sans', sans-serif;font-weight:normal;color:#fff;transform:scaleX(0.9250);transform-origin:left 0;">1. RxPDO_1 Byte Out (20)_2000_15</div>
<div class="t" style="left:424.00px;top:546.30px;font-size:15px;font-family:'Liberation Sans', sans-serif;font-weight:normal;color:#fff;">W</div>
<div class="t" style="left:505.00px;top:546.30px;font-size:15px;font-family:'Liberation Sans', sans-serif;font-weight:normal;color:#fff;transform:scaleX(0.8168);transform-origin:left 0;">BYTE</div>
<div class="ab" style="left:592px;top:544px;width:118px;height:20px;background:#fff;box-shadow:inset 0 1px 0 #d8d8d8"></div>
<div class="t" style="left:593.00px;top:545.30px;font-size:15px;font-family:'Liberation Sans', sans-serif;font-weight:normal;color:#000;transform:scaleX(0.9000);transform-origin:left 0;">5</div>
<div class="ab" style="left:10px;top:565px;width:25px;height:23px;background:#3a3a3e"></div>
<div class="ab" style="left:10px;top:587px;width:25px;height:1px;background:#a9a9a9"></div>
<div class="ab" style="left:35px;top:565px;width:748px;height:23px;background:#4b4b4f"></div>
<div class="ab" style="left:109px;top:565px;width:1px;height:23px;background:#000"></div>
<div class="ab" style="left:422px;top:565px;width:1px;height:23px;background:#000"></div>
<div class="ab" style="left:503px;top:565px;width:1px;height:23px;background:#000"></div>
<div class="ab" style="left:590px;top:565px;width:1px;height:23px;background:#000"></div>
<div class="ab" style="left:711px;top:565px;width:1px;height:23px;background:#000"></div>
<div class="t" style="left:171.00px;top:568.30px;font-size:15px;font-family:'Liberation Sans', sans-serif;font-weight:normal;color:#fff;transform:scaleX(0.9250);transform-origin:left 0;">1. RxPDO_1 Byte Out (21)_2000_16</div>
<div class="t" style="left:424.00px;top:568.30px;font-size:15px;font-family:'Liberation Sans', sans-serif;font-weight:normal;color:#fff;">W</div>
<div class="t" style="left:505.00px;top:568.30px;font-size:15px;font-family:'Liberation Sans', sans-serif;font-weight:normal;color:#fff;transform:scaleX(0.8168);transform-origin:left 0;">BYTE</div>
<div class="ab" style="left:592px;top:566px;width:118px;height:21px;background:#fff;box-shadow:inset 0 1px 0 #d8d8d8"></div>
<div class="t" style="left:593.00px;top:567.30px;font-size:15px;font-family:'Liberation Sans', sans-serif;font-weight:normal;color:#000;transform:scaleX(0.9000);transform-origin:left 0;">4</div>
<div class="ab" style="left:10px;top:588px;width:25px;height:22px;background:#3a3a3e"></div>
<div class="ab" style="left:10px;top:609px;width:25px;height:1px;background:#a9a9a9"></div>
<div class="ab" style="left:35px;top:588px;width:748px;height:22px;background:#5b5a5f"></div>
<div class="ab" style="left:35px;top:588px;width:676px;height:22px;background:#6db3ee"></div>
<div class="ab" style="left:109px;top:588px;width:1px;height:22px;background:#000"></div>
<div class="ab" style="left:422px;top:588px;width:1px;height:22px;background:#000"></div>
<div class="ab" style="left:503px;top:588px;width:1px;height:22px;background:#000"></div>
<div class="ab" style="left:590px;top:588px;width:1px;height:22px;background:#000"></div>
<div class="ab" style="left:711px;top:588px;width:1px;height:22px;background:#000"></div>
<div class="t" style="left:171.00px;top:591.30px;font-size:15px;font-family:'Liberation Sans', sans-serif;font-weight:normal;color:#fff;transform:scaleX(0.9250);transform-origin:left 0;">1. RxPDO_1 Byte Out (22)_2000_17</div>
<div class="t" style="left:424.00px;top:591.30px;font-size:15px;font-family:'Liberation Sans', sans-serif;font-weight:normal;color:#fff;">W</div>
<div class="t" style="left:505.00px;top:591.30px;font-size:15px;font-family:'Liberation Sans', sans-serif;font-weight:normal;color:#fff;transform:scaleX(0.8168);transform-origin:left 0;">BYTE</div>
<div class="t" style="left:593.00px;top:590.30px;font-size:15px;font-family:'Liberation Sans', sans-serif;font-weight:normal;color:#000;transform:scaleX(0.9000);transform-origin:left 0;">105</div>
<div class="ab" style="left:10px;top:610px;width:25px;height:23px;background:#3a3a3e"></div>
<div class="ab" style="left:10px;top:632px;width:25px;height:1px;background:#a9a9a9"></div>
<div class="ab" style="left:35px;top:610px;width:748px;height:23px;background:#4b4b4f"></div>
<div class="ab" style="left:109px;top:610px;width:1px;height:23px;background:#000"></div>
<div class="ab" style="left:422px;top:610px;width:1px;height:23px;background:#000"></div>
<div class="ab" style="left:503px;top:610px;width:1px;height:23px;background:#000"></div>
<div class="ab" style="left:590px;top:610px;width:1px;height:23px;background:#000"></div>
<div class="ab" style="left:711px;top:610px;width:1px;height:23px;background:#000"></div>
<div class="t" style="left:171.00px;top:613.30px;font-size:15px;font-family:'Liberation Sans', sans-serif;font-weight:normal;color:#fff;transform:scaleX(0.9250);transform-origin:left 0;">1. RxPDO_1 Byte Out (23)_2000_18</div>
<div class="t" style="left:424.00px;top:613.30px;font-size:15px;font-family:'Liberation Sans', sans-serif;font-weight:normal;color:#fff;">W</div>
<div class="t" style="left:505.00px;top:613.30px;font-size:15px;font-family:'Liberation Sans', sans-serif;font-weight:normal;color:#fff;transform:scaleX(0.8168);transform-origin:left 0;">BYTE</div>
<div class="ab" style="left:592px;top:611px;width:118px;height:21px;background:#fff;box-shadow:inset 0 1px 0 #d8d8d8"></div>
<div class="t" style="left:593.00px;top:612.30px;font-size:15px;font-family:'Liberation Sans', sans-serif;font-weight:normal;color:#000;transform:scaleX(0.9000);transform-origin:left 0;">2</div>
<div class="ab" style="left:10px;top:633px;width:25px;height:22px;background:#3a3a3e"></div>
<div class="ab" style="left:10px;top:654px;width:25px;height:1px;background:#a9a9a9"></div>
<div class="ab" style="left:35px;top:633px;width:748px;height:22px;background:#5b5a5f"></div>
<div class="ab" style="left:109px;top:633px;width:1px;height:22px;background:#000"></div>
<div class="ab" style="left:422px;top:633px;width:1px;height:22px;background:#000"></div>
<div class="ab" style="left:503px;top:633px;width:1px;height:22px;background:#000"></div>
<div class="ab" style="left:590px;top:633px;width:1px;height:22px;background:#000"></div>
<div class="ab" style="left:711px;top:633px;width:1px;height:22px;background:#000"></div>
<div class="t" style="left:171.00px;top:636.30px;font-size:15px;font-family:'Liberation Sans', sans-serif;font-weight:normal;color:#fff;transform:scaleX(0.9250);transform-origin:left 0;">1. RxPDO_1 Byte Out (24)_2000_19</div>
<div class="t" style="left:424.00px;top:636.30px;font-size:15px;font-family:'Liberation Sans', sans-serif;font-weight:normal;color:#fff;">W</div>
<div class="t" style="left:505.00px;top:636.30px;font-size:15px;font-family:'Liberation Sans', sans-serif;font-weight:normal;color:#fff;transform:scaleX(0.8168);transform-origin:left 0;">BYTE</div>
<div class="ab" style="left:592px;top:634px;width:118px;height:20px;background:#fff;box-shadow:inset 0 1px 0 #d8d8d8"></div>
<div class="t" style="left:593.00px;top:635.30px;font-size:15px;font-family:'Liberation Sans', sans-serif;font-weight:normal;color:#000;transform:scaleX(0.9000);transform-origin:left 0;">1</div>
<div class="ab" style="left:10px;top:655px;width:25px;height:23px;background:#3a3a3e"></div>
<div class="ab" style="left:10px;top:677px;width:25px;height:1px;background:#a9a9a9"></div>
<div class="ab" style="left:35px;top:655px;width:748px;height:23px;background:#4b4b4f"></div>
<div class="ab" style="left:109px;top:655px;width:1px;height:23px;background:#000"></div>
<div class="ab" style="left:422px;top:655px;width:1px;height:23px;background:#000"></div>
<div class="ab" style="left:503px;top:655px;width:1px;height:23px;background:#000"></div>
<div class="ab" style="left:590px;top:655px;width:1px;height:23px;background:#000"></div>
<div class="ab" style="left:711px;top:655px;width:1px;height:23px;background:#000"></div>
<div class="t" style="left:171.00px;top:658.30px;font-size:15px;font-family:'Liberation Sans', sans-serif;font-weight:normal;color:#fff;transform:scaleX(0.9250);transform-origin:left 0;">1. TxPDO_1 Byte In (0)_3000_01</div>
<div class="t" style="left:424.00px;top:658.30px;font-size:15px;font-family:'Liberation Sans', sans-serif;font-weight:normal;color:#fff;">R</div>
<div class="t" style="left:505.00px;top:658.30px;font-size:15px;font-family:'Liberation Sans', sans-serif;font-weight:normal;color:#fff;transform:scaleX(0.8168);transform-origin:left 0;">BYTE</div>
<div class="t" style="left:593.00px;top:657.30px;font-size:15px;font-family:'Liberation Sans', sans-serif;font-weight:normal;color:#fff;transform:scaleX(0.9000);transform-origin:left 0;">121</div>
<div class="ab" style="left:10px;top:678px;width:25px;height:22px;background:#3a3a3e"></div>
<div class="ab" style="left:10px;top:699px;width:25px;height:1px;background:#a9a9a9"></div>
<div class="ab" style="left:35px;top:678px;width:748px;height:22px;background:#5b5a5f"></div>
<div class="ab" style="left:109px;top:678px;width:1px;height:22px;background:#000"></div>
<div class="ab" style="left:422px;top:678px;width:1px;height:22px;background:#000"></div>
<div class="ab" style="left:503px;top:678px;width:1px;height:22px;background:#000"></div>
<div class="ab" style="left:590px;top:678px;width:1px;height:22px;background:#000"></div>
<div class="ab" style="left:711px;top:678px;width:1px;height:22px;background:#000"></div>
<div class="t" style="left:171.00px;top:681.30px;font-size:15px;font-family:'Liberation Sans', sans-serif;font-weight:normal;color:#fff;transform:scaleX(0.9250);transform-origin:left 0;">1. TxPDO_1 Byte In (1)_3000_02</div>
<div class="t" style="left:424.00px;top:681.30px;font-size:15px;font-family:'Liberation Sans', sans-serif;font-weight:normal;color:#fff;">R</div>
<div class="t" style="left:505.00px;top:681.30px;font-size:15px;font-family:'Liberation Sans', sans-serif;font-weight:normal;color:#fff;transform:scaleX(0.8168);transform-origin:left 0;">BYTE</div>
<div class="t" style="left:593.00px;top:680.30px;font-size:15px;font-family:'Liberation Sans', sans-serif;font-weight:normal;color:#fff;transform:scaleX(0.9000);transform-origin:left 0;">0</div>
<div class="ab" style="left:10px;top:700px;width:25px;height:23px;background:#3a3a3e"></div>
<div class="ab" style="left:10px;top:722px;width:25px;height:1px;background:#a9a9a9"></div>
<div class="ab" style="left:35px;top:700px;width:748px;height:23px;background:#4b4b4f"></div>
<div class="ab" style="left:109px;top:700px;width:1px;height:23px;background:#000"></div>
<div class="ab" style="left:422px;top:700px;width:1px;height:23px;background:#000"></div>
<div class="ab" style="left:503px;top:700px;width:1px;height:23px;background:#000"></div>
<div class="ab" style="left:590px;top:700px;width:1px;height:23px;background:#000"></div>
<div class="ab" style="left:711px;top:700px;width:1px;height:23px;background:#000"></div>
<div class="t" style="left:171.00px;top:703.30px;font-size:15px;font-family:'Liberation Sans', sans-serif;font-weight:normal;color:#fff;transform:scaleX(0.9250);transform-origin:left 0;">1. TxPDO_1 Byte In (2)_3000_03</div>
<div class="t" style="left:424.00px;top:703.30px;font-size:15px;font-family:'Liberation Sans', sans-serif;font-weight:normal;color:#fff;">R</div>
<div class="t" style="left:505.00px;top:703.30px;font-size:15px;font-family:'Liberation Sans', sans-serif;font-weight:normal;color:#fff;transform:scaleX(0.8168);transform-origin:left 0;">BYTE</div>
<div class="t" style="left:593.00px;top:702.30px;font-size:15px;font-family:'Liberation Sans', sans-serif;font-weight:normal;color:#fff;transform:scaleX(0.9000);transform-origin:left 0;">250</div>
<div class="ab" style="left:10px;top:723px;width:25px;height:22px;background:#3a3a3e"></div>
<div class="ab" style="left:10px;top:744px;width:25px;height:1px;background:#a9a9a9"></div>
<div class="ab" style="left:35px;top:723px;width:748px;height:22px;background:#5b5a5f"></div>
<div class="ab" style="left:109px;top:723px;width:1px;height:22px;background:#000"></div>
<div class="ab" style="left:422px;top:723px;width:1px;height:22px;background:#000"></div>
<div class="ab" style="left:503px;top:723px;width:1px;height:22px;background:#000"></div>
<div class="ab" style="left:590px;top:723px;width:1px;height:22px;background:#000"></div>
<div class="ab" style="left:711px;top:723px;width:1px;height:22px;background:#000"></div>
<div class="t" style="left:171.00px;top:726.30px;font-size:15px;font-family:'Liberation Sans', sans-serif;font-weight:normal;color:#fff;transform:scaleX(0.9250);transform-origin:left 0;">1. TxPDO_1 Byte In (3)_3000_04</div>
<div class="t" style="left:424.00px;top:726.30px;font-size:15px;font-family:'Liberation Sans', sans-serif;font-weight:normal;color:#fff;">R</div>
<div class="t" style="left:505.00px;top:726.30px;font-size:15px;font-family:'Liberation Sans', sans-serif;font-weight:normal;color:#fff;transform:scaleX(0.8168);transform-origin:left 0;">BYTE</div>
<div class="t" style="left:593.00px;top:725.30px;font-size:15px;font-family:'Liberation Sans', sans-serif;font-weight:normal;color:#fff;transform:scaleX(0.9000);transform-origin:left 0;">0</div>
<div class="ab" style="left:10px;top:745px;width:25px;height:23px;background:#3a3a3e"></div>
<div class="ab" style="left:10px;top:767px;width:25px;height:1px;background:#a9a9a9"></div>
<div class="ab" style="left:35px;top:745px;width:748px;height:23px;background:#4b4b4f"></div>
<div class="ab" style="left:109px;top:745px;width:1px;height:23px;background:#000"></div>
<div class="ab" style="left:422px;top:745px;width:1px;height:23px;background:#000"></div>
<div class="ab" style="left:503px;top:745px;width:1px;height:23px;background:#000"></div>
<div class="ab" style="left:590px;top:745px;width:1px;height:23px;background:#000"></div>
<div class="ab" style="left:711px;top:745px;width:1px;height:23px;background:#000"></div>
<div class="t" style="left:171.00px;top:748.30px;font-size:15px;font-family:'Liberation Sans', sans-serif;font-weight:normal;color:#fff;transform:scaleX(0.9250);transform-origin:left 0;">1. TxPDO_1 Byte In (4)_3000_05</div>
<div class="t" style="left:424.00px;top:748.30px;font-size:15px;font-family:'Liberation Sans', sans-serif;font-weight:normal;color:#fff;">R</div>
<div class="t" style="left:505.00px;top:748.30px;font-size:15px;font-family:'Liberation Sans', sans-serif;font-weight:normal;color:#fff;transform:scaleX(0.8168);transform-origin:left 0;">BYTE</div>
<div class="t" style="left:593.00px;top:747.30px;font-size:15px;font-family:'Liberation Sans', sans-serif;font-weight:normal;color:#fff;transform:scaleX(0.9000);transform-origin:left 0;">0</div>
<div class="ab" style="left:10px;top:768px;width:25px;height:22px;background:#3a3a3e"></div>
<div class="ab" style="left:10px;top:789px;width:25px;height:1px;background:#a9a9a9"></div>
<div class="ab" style="left:35px;top:768px;width:748px;height:22px;background:#5b5a5f"></div>
<div class="ab" style="left:109px;top:768px;width:1px;height:22px;background:#000"></div>
<div class="ab" style="left:422px;top:768px;width:1px;height:22px;background:#000"></div>
<div class="ab" style="left:503px;top:768px;width:1px;height:22px;background:#000"></div>
<div class="ab" style="left:590px;top:768px;width:1px;height:22px;background:#000"></div>
<div class="ab" style="left:711px;top:768px;width:1px;height:22px;background:#000"></div>
<div class="t" style="left:171.00px;top:771.30px;font-size:15px;font-family:'Liberation Sans', sans-serif;font-weight:normal;color:#fff;transform:scaleX(0.9250);transform-origin:left 0;">1. TxPDO_1 Byte In (5)_3000_06</div>
<div class="t" style="left:424.00px;top:771.30px;font-size:15px;font-family:'Liberation Sans', sans-serif;font-weight:normal;color:#fff;">R</div>
<div class="t" style="left:505.00px;top:771.30px;font-size:15px;font-family:'Liberation Sans', sans-serif;font-weight:normal;color:#fff;transform:scaleX(0.8168);transform-origin:left 0;">BYTE</div>
<div class="t" style="left:593.00px;top:770.30px;font-size:15px;font-family:'Liberation Sans', sans-serif;font-weight:normal;color:#fff;transform:scaleX(0.9000);transform-origin:left 0;">43</div>
<div class="ab" style="left:10px;top:790px;width:25px;height:23px;background:#3a3a3e"></div>
<div class="ab" style="left:10px;top:812px;width:25px;height:1px;background:#a9a9a9"></div>
<div class="ab" style="left:35px;top:790px;width:748px;height:23px;background:#4b4b4f"></div>
<div class="ab" style="left:109px;top:790px;width:1px;height:23px;background:#000"></div>
<div class="ab" style="left:422px;top:790px;width:1px;height:23px;background:#000"></div>
<div class="ab" style="left:503px;top:790px;width:1px;height:23px;background:#000"></div>
<div class="ab" style="left:590px;top:790px;width:1px;height:23px;background:#000"></div>
<div class="ab" style="left:711px;top:790px;width:1px;height:23px;background:#000"></div>
<div class="t" style="left:171.00px;top:793.30px;font-size:15px;font-family:'Liberation Sans', sans-serif;font-weight:normal;color:#fff;transform:scaleX(0.9250);transform-origin:left 0;">1. TxPDO_1 Byte In (6)_3000_07</div>
<div class="t" style="left:424.00px;top:793.30px;font-size:15px;font-family:'Liberation Sans', sans-serif;font-weight:normal;color:#fff;">R</div>
<div class="t" style="left:505.00px;top:793.30px;font-size:15px;font-family:'Liberation Sans', sans-serif;font-weight:normal;color:#fff;transform:scaleX(0.8168);transform-origin:left 0;">BYTE</div>
<div class="t" style="left:593.00px;top:792.30px;font-size:15px;font-family:'Liberation Sans', sans-serif;font-weight:normal;color:#fff;transform:scaleX(0.9000);transform-origin:left 0;">103</div>
<div class="ab" style="left:10px;top:813px;width:25px;height:22px;background:#3a3a3e"></div>
<div class="ab" style="left:10px;top:834px;width:25px;height:1px;background:#a9a9a9"></div>
<div class="ab" style="left:35px;top:813px;width:748px;height:22px;background:#5b5a5f"></div>
<div class="ab" style="left:109px;top:813px;width:1px;height:22px;background:#000"></div>
<div class="ab" style="left:422px;top:813px;width:1px;height:22px;background:#000"></div>
<div class="ab" style="left:503px;top:813px;width:1px;height:22px;background:#000"></div>
<div class="ab" style="left:590px;top:813px;width:1px;height:22px;background:#000"></div>
<div class="ab" style="left:711px;top:813px;width:1px;height:22px;background:#000"></div>
<div class="t" style="left:171.00px;top:816.30px;font-size:15px;font-family:'Liberation Sans', sans-serif;font-weight:normal;color:#fff;transform:scaleX(0.9250);transform-origin:left 0;">1. TxPDO_1 Byte In (7)_3000_08</div>
<div class="t" style="left:424.00px;top:816.30px;font-size:15px;font-family:'Liberation Sans', sans-serif;font-weight:normal;color:#fff;">R</div>
<div class="t" style="left:505.00px;top:816.30px;font-size:15px;font-family:'Liberation Sans', sans-serif;font-weight:normal;color:#fff;transform:scaleX(0.8168);transform-origin:left 0;">BYTE</div>
<div class="t" style="left:593.00px;top:815.30px;font-size:15px;font-family:'Liberation Sans', sans-serif;font-weight:normal;color:#fff;transform:scaleX(0.9000);transform-origin:left 0;">0</div>
<div class="ab" style="left:10px;top:835px;width:25px;height:23px;background:#3a3a3e"></div>
<div class="ab" style="left:10px;top:857px;width:25px;height:1px;background:#a9a9a9"></div>
<div class="ab" style="left:35px;top:835px;width:748px;height:23px;background:#4b4b4f"></div>
<div class="ab" style="left:109px;top:835px;width:1px;height:23px;background:#000"></div>
<div class="ab" style="left:422px;top:835px;width:1px;height:23px;background:#000"></div>
<div class="ab" style="left:503px;top:835px;width:1px;height:23px;background:#000"></div>
<div class="ab" style="left:590px;top:835px;width:1px;height:23px;background:#000"></div>
<div class="ab" style="left:711px;top:835px;width:1px;height:23px;background:#000"></div>
<div class="t" style="left:171.00px;top:838.30px;font-size:15px;font-family:'Liberation Sans', sans-serif;font-weight:normal;color:#fff;transform:scaleX(0.9250);transform-origin:left 0;">1. TxPDO_1 Byte In (8)_3000_09</div>
<div class="t" style="left:424.00px;top:838.30px;font-size:15px;font-family:'Liberation Sans', sans-serif;font-weight:normal;color:#fff;">R</div>
<div class="t" style="left:505.00px;top:838.30px;font-size:15px;font-family:'Liberation Sans', sans-serif;font-weight:normal;color:#fff;transform:scaleX(0.8168);transform-origin:left 0;">BYTE</div>
<div class="t" style="left:593.00px;top:837.30px;font-size:15px;font-family:'Liberation Sans', sans-serif;font-weight:normal;color:#fff;transform:scaleX(0.9000);transform-origin:left 0;">0</div>
<div class="ab" style="left:10px;top:858px;width:25px;height:22px;background:#3a3a3e"></div>
<div class="ab" style="left:10px;top:879px;width:25px;height:1px;background:#a9a9a9"></div>
<div class="ab" style="left:35px;top:858px;width:748px;height:22px;background:#5b5a5f"></div>
<div class="ab" style="left:109px;top:858px;width:1px;height:22px;background:#000"></div>
<div class="ab" style="left:422px;top:858px;width:1px;height:22px;background:#000"></div>
<div class="ab" style="left:503px;top:858px;width:1px;height:22px;background:#000"></div>
<div class="ab" style="left:590px;top:858px;width:1px;height:22px;background:#000"></div>
<div class="ab" style="left:711px;top:858px;width:1px;height:22px;background:#000"></div>
<div class="t" style="left:171.00px;top:861.30px;font-size:15px;font-family:'Liberation Sans', sans-serif;font-weight:normal;color:#fff;transform:scaleX(0.9250);transform-origin:left 0;">1. TxPDO_1 Byte In (9)_3000_0A</div>
<div class="t" style="left:424.00px;top:861.30px;font-size:15px;font-family:'Liberation Sans', sans-serif;font-weight:normal;color:#fff;">R</div>
<div class="t" style="left:505.00px;top:861.30px;font-size:15px;font-family:'Liberation Sans', sans-serif;font-weight:normal;color:#fff;transform:scaleX(0.8168);transform-origin:left 0;">BYTE</div>
<div class="t" style="left:593.00px;top:860.30px;font-size:15px;font-family:'Liberation Sans', sans-serif;font-weight:normal;color:#fff;transform:scaleX(0.9000);transform-origin:left 0;">0</div>
<div class="ab" style="left:10px;top:880px;width:25px;height:23px;background:#3a3a3e"></div>
<div class="ab" style="left:10px;top:902px;width:25px;height:1px;background:#a9a9a9"></div>
<div class="ab" style="left:35px;top:880px;width:748px;height:23px;background:#4b4b4f"></div>
<div class="ab" style="left:109px;top:880px;width:1px;height:23px;background:#000"></div>
<div class="ab" style="left:422px;top:880px;width:1px;height:23px;background:#000"></div>
<div class="ab" style="left:503px;top:880px;width:1px;height:23px;background:#000"></div>
<div class="ab" style="left:590px;top:880px;width:1px;height:23px;background:#000"></div>
<div class="ab" style="left:711px;top:880px;width:1px;height:23px;background:#000"></div>
<div class="t" style="left:171.00px;top:883.30px;font-size:15px;font-family:'Liberation Sans', sans-serif;font-weight:normal;color:#fff;transform:scaleX(0.9250);transform-origin:left 0;">1. TxPDO_1 Byte In (10)_3000_0B</div>
<div class="t" style="left:424.00px;top:883.30px;font-size:15px;font-family:'Liberation Sans', sans-serif;font-weight:normal;color:#fff;">R</div>
<div class="t" style="left:505.00px;top:883.30px;font-size:15px;font-family:'Liberation Sans', sans-serif;font-weight:normal;color:#fff;transform:scaleX(0.8168);transform-origin:left 0;">BYTE</div>
<div class="t" style="left:593.00px;top:882.30px;font-size:15px;font-family:'Liberation Sans', sans-serif;font-weight:normal;color:#fff;transform:scaleX(0.9000);transform-origin:left 0;">0</div>
<div class="ab" style="left:10px;top:903px;width:25px;height:22px;background:#3a3a3e"></div>
<div class="ab" style="left:10px;top:924px;width:25px;height:1px;background:#a9a9a9"></div>
<div class="ab" style="left:35px;top:903px;width:748px;height:22px;background:#5b5a5f"></div>
<div class="ab" style="left:109px;top:903px;width:1px;height:22px;background:#000"></div>
<div class="ab" style="left:422px;top:903px;width:1px;height:22px;background:#000"></div>
<div class="ab" style="left:503px;top:903px;width:1px;height:22px;background:#000"></div>
<div class="ab" style="left:590px;top:903px;width:1px;height:22px;background:#000"></div>
<div class="ab" style="left:711px;top:903px;width:1px;height:22px;background:#000"></div>
<div class="t" style="left:171.00px;top:906.30px;font-size:15px;font-family:'Liberation Sans', sans-serif;font-weight:normal;color:#fff;transform:scaleX(0.9250);transform-origin:left 0;">1. TxPDO_1 Byte In (11)_3000_0C</div>
<div class="t" style="left:424.00px;top:906.30px;font-size:15px;font-family:'Liberation Sans', sans-serif;font-weight:normal;color:#fff;">R</div>
<div class="t" style="left:505.00px;top:906.30px;font-size:15px;font-family:'Liberation Sans', sans-serif;font-weight:normal;color:#fff;transform:scaleX(0.8168);transform-origin:left 0;">BYTE</div>
<div class="t" style="left:593.00px;top:905.30px;font-size:15px;font-family:'Liberation Sans', sans-serif;font-weight:normal;color:#fff;transform:scaleX(0.9000);transform-origin:left 0;">0</div>
<div class="ab" style="left:10px;top:925px;width:25px;height:23px;background:#3a3a3e"></div>
<div class="ab" style="left:10px;top:947px;width:25px;height:1px;background:#a9a9a9"></div>
<div class="ab" style="left:35px;top:925px;width:748px;height:23px;background:#4b4b4f"></div>
<div class="ab" style="left:109px;top:925px;width:1px;height:23px;background:#000"></div>
<div class="ab" style="left:422px;top:925px;width:1px;height:23px;background:#000"></div>
<div class="ab" style="left:503px;top:925px;width:1px;height:23px;background:#000"></div>
<div class="ab" style="left:590px;top:925px;width:1px;height:23px;background:#000"></div>
<div class="ab" style="left:711px;top:925px;width:1px;height:23px;background:#000"></div>
<div class="t" style="left:171.00px;top:928.30px;font-size:15px;font-family:'Liberation Sans', sans-serif;font-weight:normal;color:#fff;transform:scaleX(0.9250);transform-origin:left 0;">1. TxPDO_1 Byte In (12)_3000_0D</div>
<div class="t" style="left:424.00px;top:928.30px;font-size:15px;font-family:'Liberation Sans', sans-serif;font-weight:normal;color:#fff;">R</div>
<div class="t" style="left:505.00px;top:928.30px;font-size:15px;font-family:'Liberation Sans', sans-serif;font-weight:normal;color:#fff;transform:scaleX(0.8168);transform-origin:left 0;">BYTE</div>
<div class="t" style="left:593.00px;top:927.30px;font-size:15px;font-family:'Liberation Sans', sans-serif;font-weight:normal;color:#fff;transform:scaleX(0.9000);transform-origin:left 0;">0</div>
<div class="ab" style="left:10px;top:948px;width:25px;height:22px;background:#3a3a3e"></div>
<div class="ab" style="left:10px;top:969px;width:25px;height:1px;background:#a9a9a9"></div>
<div class="ab" style="left:35px;top:948px;width:748px;height:22px;background:#5b5a5f"></div>
<div class="ab" style="left:109px;top:948px;width:1px;height:22px;background:#000"></div>
<div class="ab" style="left:422px;top:948px;width:1px;height:22px;background:#000"></div>
<div class="ab" style="left:503px;top:948px;width:1px;height:22px;background:#000"></div>
<div class="ab" style="left:590px;top:948px;width:1px;height:22px;background:#000"></div>
<div class="ab" style="left:711px;top:948px;width:1px;height:22px;background:#000"></div>
<div class="t" style="left:171.00px;top:951.30px;font-size:15px;font-family:'Liberation Sans', sans-serif;font-weight:normal;color:#fff;transform:scaleX(0.9250);transform-origin:left 0;">1. TxPDO_1 Byte In (13)_3000_0E</div>
<div class="t" style="left:424.00px;top:951.30px;font-size:15px;font-family:'Liberation Sans', sans-serif;font-weight:normal;color:#fff;">R</div>
<div class="t" style="left:505.00px;top:951.30px;font-size:15px;font-family:'Liberation Sans', sans-serif;font-weight:normal;color:#fff;transform:scaleX(0.8168);transform-origin:left 0;">BYTE</div>
<div class="t" style="left:593.00px;top:950.30px;font-size:15px;font-family:'Liberation Sans', sans-serif;font-weight:normal;color:#fff;transform:scaleX(0.9000);transform-origin:left 0;">1</div>
<div class="ab" style="left:10px;top:970px;width:25px;height:23px;background:#3a3a3e"></div>
<div class="ab" style="left:10px;top:992px;width:25px;height:1px;background:#a9a9a9"></div>
<div class="ab" style="left:35px;top:970px;width:748px;height:23px;background:#4b4b4f"></div>
<div class="ab" style="left:109px;top:970px;width:1px;height:23px;background:#000"></div>
<div class="ab" style="left:422px;top:970px;width:1px;height:23px;background:#000"></div>
<div class="ab" style="left:503px;top:970px;width:1px;height:23px;background:#000"></div>
<div class="ab" style="left:590px;top:970px;width:1px;height:23px;background:#000"></div>
<div class="ab" style="left:711px;top:970px;width:1px;height:23px;background:#000"></div>
<div class="t" style="left:171.00px;top:973.30px;font-size:15px;font-family:'Liberation Sans', sans-serif;font-weight:normal;color:#fff;transform:scaleX(0.9250);transform-origin:left 0;">1. TxPDO_1 Byte In (14)_3000_0F</div>
<div class="t" style="left:424.00px;top:973.30px;font-size:15px;font-family:'Liberation Sans', sans-serif;font-weight:normal;color:#fff;">R</div>
<div class="t" style="left:505.00px;top:973.30px;font-size:15px;font-family:'Liberation Sans', sans-serif;font-weight:normal;color:#fff;transform:scaleX(0.8168);transform-origin:left 0;">BYTE</div>
<div class="t" style="left:593.00px;top:972.30px;font-size:15px;font-family:'Liberation Sans', sans-serif;font-weight:normal;color:#fff;transform:scaleX(0.9000);transform-origin:left 0;">97</div>
<div class="ab" style="left:10px;top:993px;width:25px;height:22px;background:#3a3a3e"></div>
<div class="ab" style="left:10px;top:1014px;width:25px;height:1px;background:#a9a9a9"></div>
<div class="ab" style="left:35px;top:993px;width:748px;height:22px;background:#5b5a5f"></div>
<div class="ab" style="left:109px;top:993px;width:1px;height:22px;background:#000"></div>
<div class="ab" style="left:422px;top:993px;width:1px;height:22px;background:#000"></div>
<div class="ab" style="left:503px;top:993px;width:1px;height:22px;background:#000"></div>
<div class="ab" style="left:590px;top:993px;width:1px;height:22px;background:#000"></div>
<div class="ab" style="left:711px;top:993px;width:1px;height:22px;background:#000"></div>
<div class="t" style="left:171.00px;top:996.30px;font-size:15px;font-family:'Liberation Sans', sans-serif;font-weight:normal;color:#fff;transform:scaleX(0.9250);transform-origin:left 0;">1. TxPDO_1 Byte In (15)_3000_10</div>
<div class="t" style="left:424.00px;top:996.30px;font-size:15px;font-family:'Liberation Sans', sans-serif;font-weight:normal;color:#fff;">R</div>
<div class="t" style="left:505.00px;top:996.30px;font-size:15px;font-family:'Liberation Sans', sans-serif;font-weight:normal;color:#fff;transform:scaleX(0.8168);transform-origin:left 0;">BYTE</div>
<div class="t" style="left:593.00px;top:995.30px;font-size:15px;font-family:'Liberation Sans', sans-serif;font-weight:normal;color:#fff;transform:scaleX(0.9000);transform-origin:left 0;">11</div>
<div class="ab" style="left:10px;top:1015px;width:25px;height:23px;background:#3a3a3e"></div>
<div class="ab" style="left:10px;top:1037px;width:25px;height:1px;background:#a9a9a9"></div>
<div class="ab" style="left:35px;top:1015px;width:748px;height:23px;background:#4b4b4f"></div>
<div class="ab" style="left:109px;top:1015px;width:1px;height:23px;background:#000"></div>
<div class="ab" style="left:422px;top:1015px;width:1px;height:23px;background:#000"></div>
<div class="ab" style="left:503px;top:1015px;width:1px;height:23px;background:#000"></div>
<div class="ab" style="left:590px;top:1015px;width:1px;height:23px;background:#000"></div>
<div class="ab" style="left:711px;top:1015px;width:1px;height:23px;background:#000"></div>
<div class="t" style="left:171.00px;top:1018.30px;font-size:15px;font-family:'Liberation Sans', sans-serif;font-weight:normal;color:#fff;transform:scaleX(0.9250);transform-origin:left 0;">1. TxPDO_1 Byte In (16)_3000_11</div>
<div class="t" style="left:424.00px;top:1018.30px;font-size:15px;font-family:'Liberation Sans', sans-serif;font-weight:normal;color:#fff;">R</div>
<div class="t" style="left:505.00px;top:1018.30px;font-size:15px;font-family:'Liberation Sans', sans-serif;font-weight:normal;color:#fff;transform:scaleX(0.8168);transform-origin:left 0;">BYTE</div>
<div class="t" style="left:593.00px;top:1017.30px;font-size:15px;font-family:'Liberation Sans', sans-serif;font-weight:normal;color:#fff;transform:scaleX(0.9000);transform-origin:left 0;">22</div>
<div class="ab" style="left:10px;top:1038px;width:25px;height:22px;background:#3a3a3e"></div>
<div class="ab" style="left:10px;top:1059px;width:25px;height:1px;background:#a9a9a9"></div>
<div class="ab" style="left:35px;top:1038px;width:748px;height:22px;background:#5b5a5f"></div>
<div class="ab" style="left:109px;top:1038px;width:1px;height:22px;background:#000"></div>
<div class="ab" style="left:422px;top:1038px;width:1px;height:22px;background:#000"></div>
<div class="ab" style="left:503px;top:1038px;width:1px;height:22px;background:#000"></div>
<div class="ab" style="left:590px;top:1038px;width:1px;height:22px;background:#000"></div>
<div class="ab" style="left:711px;top:1038px;width:1px;height:22px;background:#000"></div>
<div class="t" style="left:171.00px;top:1041.30px;font-size:15px;font-family:'Liberation Sans', sans-serif;font-weight:normal;color:#fff;transform:scaleX(0.9250);transform-origin:left 0;">1. TxPDO_1 Byte In (17)_3000_12</div>
<div class="t" style="left:424.00px;top:1041.30px;font-size:15px;font-family:'Liberation Sans', sans-serif;font-weight:normal;color:#fff;">R</div>
<div class="t" style="left:505.00px;top:1041.30px;font-size:15px;font-family:'Liberation Sans', sans-serif;font-weight:normal;color:#fff;transform:scaleX(0.8168);transform-origin:left 0;">BYTE</div>
<div class="t" style="left:593.00px;top:1040.30px;font-size:15px;font-family:'Liberation Sans', sans-serif;font-weight:normal;color:#fff;transform:scaleX(0.9000);transform-origin:left 0;">33</div>
<div class="ab" style="left:10px;top:1060px;width:25px;height:23px;background:#3a3a3e"></div>
<div class="ab" style="left:10px;top:1082px;width:25px;height:1px;background:#a9a9a9"></div>
<div class="ab" style="left:35px;top:1060px;width:748px;height:23px;background:#4b4b4f"></div>
<div class="ab" style="left:109px;top:1060px;width:1px;height:23px;background:#000"></div>
<div class="ab" style="left:422px;top:1060px;width:1px;height:23px;background:#000"></div>
<div class="ab" style="left:503px;top:1060px;width:1px;height:23px;background:#000"></div>
<div class="ab" style="left:590px;top:1060px;width:1px;height:23px;background:#000"></div>
<div class="ab" style="left:711px;top:1060px;width:1px;height:23px;background:#000"></div>
<div class="t" style="left:171.00px;top:1063.30px;font-size:15px;font-family:'Liberation Sans', sans-serif;font-weight:normal;color:#fff;transform:scaleX(0.9250);transform-origin:left 0;">1. TxPDO_1 Byte In (18)_3000_13</div>
<div class="t" style="left:424.00px;top:1063.30px;font-size:15px;font-family:'Liberation Sans', sans-serif;font-weight:normal;color:#fff;">R</div>
<div class="t" style="left:505.00px;top:1063.30px;font-size:15px;font-family:'Liberation Sans', sans-serif;font-weight:normal;color:#fff;transform:scaleX(0.8168);transform-origin:left 0;">BYTE</div>
<div class="t" style="left:593.00px;top:1062.30px;font-size:15px;font-family:'Liberation Sans', sans-serif;font-weight:normal;color:#fff;transform:scaleX(0.9000);transform-origin:left 0;">44</div>
<div class="ab" style="left:10px;top:1083px;width:25px;height:22px;background:#3a3a3e"></div>
<div class="ab" style="left:10px;top:1104px;width:25px;height:1px;background:#a9a9a9"></div>
<div class="ab" style="left:35px;top:1083px;width:748px;height:22px;background:#5b5a5f"></div>
<div class="ab" style="left:109px;top:1083px;width:1px;height:22px;background:#000"></div>
<div class="ab" style="left:422px;top:1083px;width:1px;height:22px;background:#000"></div>
<div class="ab" style="left:503px;top:1083px;width:1px;height:22px;background:#000"></div>
<div class="ab" style="left:590px;top:1083px;width:1px;height:22px;background:#000"></div>
<div class="ab" style="left:711px;top:1083px;width:1px;height:22px;background:#000"></div>
<div class="t" style="left:171.00px;top:1086.30px;font-size:15px;font-family:'Liberation Sans', sans-serif;font-weight:normal;color:#fff;transform:scaleX(0.9250);transform-origin:left 0;">1. TxPDO_1 Byte In (19)_3000_14</div>
<div class="t" style="left:424.00px;top:1086.30px;font-size:15px;font-family:'Liberation Sans', sans-serif;font-weight:normal;color:#fff;">R</div>
<div class="t" style="left:505.00px;top:1086.30px;font-size:15px;font-family:'Liberation Sans', sans-serif;font-weight:normal;color:#fff;transform:scaleX(0.8168);transform-origin:left 0;">BYTE</div>
<div class="t" style="left:593.00px;top:1085.30px;font-size:15px;font-family:'Liberation Sans', sans-serif;font-weight:normal;color:#fff;transform:scaleX(0.9000);transform-origin:left 0;">55</div>
<div class="ab" style="left:10px;top:1105px;width:25px;height:23px;background:#3a3a3e"></div>
<div class="ab" style="left:10px;top:1127px;width:25px;height:1px;background:#a9a9a9"></div>
<div class="ab" style="left:35px;top:1105px;width:748px;height:23px;background:#4b4b4f"></div>
<div class="ab" style="left:109px;top:1105px;width:1px;height:23px;background:#000"></div>
<div class="ab" style="left:422px;top:1105px;width:1px;height:23px;background:#000"></div>
<div class="ab" style="left:503px;top:1105px;width:1px;height:23px;background:#000"></div>
<div class="ab" style="left:590px;top:1105px;width:1px;height:23px;background:#000"></div>
<div class="ab" style="left:711px;top:1105px;width:1px;height:23px;background:#000"></div>
<div class="t" style="left:171.00px;top:1108.30px;font-size:15px;font-family:'Liberation Sans', sans-serif;font-weight:normal;color:#fff;transform:scaleX(0.9250);transform-origin:left 0;">1. TxPDO_1 Byte In (20)_3000_15</div>
<div class="t" style="left:424.00px;top:1108.30px;font-size:15px;font-family:'Liberation Sans', sans-serif;font-weight:normal;color:#fff;">R</div>
<div class="t" style="left:505.00px;top:1108.30px;font-size:15px;font-family:'Liberation Sans', sans-serif;font-weight:normal;color:#fff;transform:scaleX(0.8168);transform-origin:left 0;">BYTE</div>
<div class="t" style="left:593.00px;top:1107.30px;font-size:15px;font-family:'Liberation Sans', sans-serif;font-weight:normal;color:#fff;transform:scaleX(0.9000);transform-origin:left 0;">66</div>
<div class="ab" style="left:10px;top:1128px;width:25px;height:22px;background:#3a3a3e"></div>
<div class="ab" style="left:10px;top:1149px;width:25px;height:1px;background:#a9a9a9"></div>
<div class="ab" style="left:35px;top:1128px;width:748px;height:22px;background:#5b5a5f"></div>
<div class="ab" style="left:109px;top:1128px;width:1px;height:22px;background:#000"></div>
<div class="ab" style="left:422px;top:1128px;width:1px;height:22px;background:#000"></div>
<div class="ab" style="left:503px;top:1128px;width:1px;height:22px;background:#000"></div>
<div class="ab" style="left:590px;top:1128px;width:1px;height:22px;background:#000"></div>
<div class="ab" style="left:711px;top:1128px;width:1px;height:22px;background:#000"></div>
<div class="t" style="left:171.00px;top:1131.30px;font-size:15px;font-family:'Liberation Sans', sans-serif;font-weight:normal;color:#fff;transform:scaleX(0.9250);transform-origin:left 0;">1. TxPDO_1 Byte In (21)_3000_16</div>
<div class="t" style="left:424.00px;top:1131.30px;font-size:15px;font-family:'Liberation Sans', sans-serif;font-weight:normal;color:#fff;">R</div>
<div class="t" style="left:505.00px;top:1131.30px;font-size:15px;font-family:'Liberation Sans', sans-serif;font-weight:normal;color:#fff;transform:scaleX(0.8168);transform-origin:left 0;">BYTE</div>
<div class="t" style="left:593.00px;top:1130.30px;font-size:15px;font-family:'Liberation Sans', sans-serif;font-weight:normal;color:#fff;transform:scaleX(0.9000);transform-origin:left 0;">77</div>
<div class="ab" style="left:10px;top:1150px;width:25px;height:23px;background:#3a3a3e"></div>
<div class="ab" style="left:10px;top:1172px;width:25px;height:1px;background:#a9a9a9"></div>
<div class="ab" style="left:35px;top:1150px;width:748px;height:23px;background:#4b4b4f"></div>
<div class="ab" style="left:109px;top:1150px;width:1px;height:23px;background:#000"></div>
<div class="ab" style="left:422px;top:1150px;width:1px;height:23px;background:#000"></div>
<div class="ab" style="left:503px;top:1150px;width:1px;height:23px;background:#000"></div>
<div class="ab" style="left:590px;top:1150px;width:1px;height:23px;background:#000"></div>
<div class="ab" style="left:711px;top:1150px;width:1px;height:23px;background:#000"></div>
<div class="t" style="left:171.00px;top:1153.30px;font-size:15px;font-family:'Liberation Sans', sans-serif;font-weight:normal;color:#fff;transform:scaleX(0.9250);transform-origin:left 0;">1. TxPDO_1 Byte In (22)_3000_17</div>
<div class="t" style="left:424.00px;top:1153.30px;font-size:15px;font-family:'Liberation Sans', sans-serif;font-weight:normal;color:#fff;">R</div>
<div class="t" style="left:505.00px;top:1153.30px;font-size:15px;font-family:'Liberation Sans', sans-serif;font-weight:normal;color:#fff;transform:scaleX(0.8168);transform-origin:left 0;">BYTE</div>
<div class="t" style="left:593.00px;top:1152.30px;font-size:15px;font-family:'Liberation Sans', sans-serif;font-weight:normal;color:#fff;transform:scaleX(0.9000);transform-origin:left 0;">88</div>
<div class="ab" style="left:10px;top:1173px;width:25px;height:22px;background:#3a3a3e"></div>
<div class="ab" style="left:10px;top:1194px;width:25px;height:1px;background:#a9a9a9"></div>
<div class="ab" style="left:35px;top:1173px;width:748px;height:22px;background:#5b5a5f"></div>
<div class="ab" style="left:109px;top:1173px;width:1px;height:22px;background:#000"></div>
<div class="ab" style="left:422px;top:1173px;width:1px;height:22px;background:#000"></div>
<div class="ab" style="left:503px;top:1173px;width:1px;height:22px;background:#000"></div>
<div class="ab" style="left:590px;top:1173px;width:1px;height:22px;background:#000"></div>
<div class="ab" style="left:711px;top:1173px;width:1px;height:22px;background:#000"></div>
<div class="t" style="left:171.00px;top:1176.30px;font-size:15px;font-family:'Liberation Sans', sans-serif;font-weight:normal;color:#fff;transform:scaleX(0.9250);transform-origin:left 0;">1. TxPDO_1 Byte In (23)_3000_18</div>
<div class="t" style="left:424.00px;top:1176.30px;font-size:15px;font-family:'Liberation Sans', sans-serif;font-weight:normal;color:#fff;">R</div>
<div class="t" style="left:505.00px;top:1176.30px;font-size:15px;font-family:'Liberation Sans', sans-serif;font-weight:normal;color:#fff;transform:scaleX(0.8168);transform-origin:left 0;">BYTE</div>
<div class="t" style="left:593.00px;top:1175.30px;font-size:15px;font-family:'Liberation Sans', sans-serif;font-weight:normal;color:#fff;transform:scaleX(0.9000);transform-origin:left 0;">99</div>
<div class="ab" style="left:10px;top:1195px;width:25px;height:23px;background:#3a3a3e"></div>
<div class="ab" style="left:10px;top:1217px;width:25px;height:1px;background:#a9a9a9"></div>
<div class="ab" style="left:35px;top:1195px;width:748px;height:23px;background:#4b4b4f"></div>
<div class="ab" style="left:109px;top:1195px;width:1px;height:23px;background:#000"></div>
<div class="ab" style="left:422px;top:1195px;width:1px;height:23px;background:#000"></div>
<div class="ab" style="left:503px;top:1195px;width:1px;height:23px;background:#000"></div>
<div class="ab" style="left:590px;top:1195px;width:1px;height:23px;background:#000"></div>
<div class="ab" style="left:711px;top:1195px;width:1px;height:23px;background:#000"></div>
<div class="t" style="left:171.00px;top:1198.30px;font-size:15px;font-family:'Liberation Sans', sans-serif;font-weight:normal;color:#fff;transform:scaleX(0.9250);transform-origin:left 0;">1. TxPDO_1 Byte In (24)_3000_19</div>
<div class="t" style="left:424.00px;top:1198.30px;font-size:15px;font-family:'Liberation Sans', sans-serif;font-weight:normal;color:#fff;">R</div>
<div class="t" style="left:505.00px;top:1198.30px;font-size:15px;font-family:'Liberation Sans', sans-serif;font-weight:normal;color:#fff;transform:scaleX(0.8168);transform-origin:left 0;">BYTE</div>
<div class="t" style="left:593.00px;top:1197.30px;font-size:15px;font-family:'Liberation Sans', sans-serif;font-weight:normal;color:#fff;transform:scaleX(0.9000);transform-origin:left 0;">101</div>
<div class="ab" style="left:9px;top:1218px;width:795px;height:2px;background:#000"></div>
<div class="ab" style="left:783px;top:90px;width:20px;height:1128px;background:#2d2d2f"></div>
<div class="ab" style="left:783px;top:90px;width:20px;height:20px;background:#262628"></div>
<div class="ab" style="left:783px;top:110px;width:20px;height:1px;background:#3c3c3e"></div>
<svg class="ab" style="left:786px;top:94px" width="14" height="10"><path d="M1.5 8L7 2.5L12.5 8" stroke="#55555a" stroke-width="1.6" fill="none"/></svg>
<div class="ab" style="left:788px;top:152px;width:9px;height:659px;background:#6e6e6e"></div>
<div class="ab" style="left:783px;top:1198px;width:20px;height:19px;background:#2a2a2c"></div>
<svg class="ab" style="left:786px;top:1203px" width="14" height="10"><path d="M1.5 2L7 7.5L12.5 2" stroke="#55555a" stroke-width="1.6" fill="none"/></svg>
<div class="ab" style="left:803px;top:71px;width:1px;height:1149px;background:#000"></div>
<div class="ab" style="left:9px;top:72px;width:1px;height:1148px;background:#000"></div>
<div class="ab" style="left:10px;top:1229px;width:597px;height:36px;border:1px solid #dcd8c4;border-radius:4px"></div>
<div class="ab" style="left:16px;top:1227px;width:95px;height:4px;background:#4a4a4e"></div>
<div class="t" style="left:20.00px;top:1219.88px;font-size:15.5px;font-family:'Liberation Sans', sans-serif;font-weight:normal;color:#fff;transform:scaleX(1.0142);transform-origin:left 0;">Monitor type</div>
<div class="ab" style="left:608px;top:1229px;width:196px;height:36px;border:1px solid #dcd8c4;border-radius:4px"></div>
<div class="ab" style="left:614px;top:1227px;width:66px;height:4px;background:#4a4a4e"></div>
<div class="t" style="left:618.00px;top:1220.05px;font-size:15.3px;font-family:'Liberation Sans', sans-serif;font-weight:normal;color:#fff;">Bit order</div>
<div class="ab" style="left:23px;top:1238px;width:20px;height:20px;border-radius:50%;background:linear-gradient(#e8e8e8 0%,#d4d4d4 40%,#bcbcbc 55%,#d8d8d8 100%);border:1px solid #111;box-shadow:0 0 0 0.6px #222"></div>
<div class="t" style="left:48.00px;top:1238.80px;font-size:15px;font-family:'Liberation Sans', sans-serif;font-weight:normal;color:#fff;">Data type</div>
<div class="ab" style="left:121px;top:1238px;width:20px;height:20px;border-radius:50%;background:linear-gradient(#e8e8e8 0%,#d4d4d4 40%,#bcbcbc 55%,#d8d8d8 100%);border:1px solid #111;box-shadow:0 0 0 0.6px #222"></div>
<div class="t" style="left:147.00px;top:1238.80px;font-size:15px;font-family:'Liberation Sans', sans-serif;font-weight:normal;color:#fff;transform:scaleX(0.9643);transform-origin:left 0;">Binary</div>
<div class="ab" style="left:194px;top:1238px;width:20px;height:20px;border-radius:50%;background:linear-gradient(#e8e8e8 0%,#d4d4d4 40%,#bcbcbc 55%,#d8d8d8 100%);border:1px solid #111;box-shadow:0 0 0 0.6px #222"></div>
<div class="t" style="left:219.00px;top:1238.80px;font-size:15px;font-family:'Liberation Sans', sans-serif;font-weight:normal;color:#fff;transform:scaleX(0.9372);transform-origin:left 0;">Hex</div>
<div class="ab" style="left:251px;top:1238px;width:20px;height:20px;border-radius:50%;background:linear-gradient(#e8e8e8 0%,#d4d4d4 40%,#bcbcbc 55%,#d8d8d8 100%);border:1px solid #111;box-shadow:0 0 0 0.6px #222"></div>
<div class="t" style="left:276.00px;top:1238.80px;font-size:15px;font-family:'Liberation Sans', sans-serif;font-weight:normal;color:#fff;transform:scaleX(0.9750);transform-origin:left 0;">Signed decimal</div>
<div class="ab" style="left:382px;top:1238px;width:20px;height:20px;border-radius:50%;background:radial-gradient(circle at 50% 45%,#d8ecff 0,#a9d2fa 55%,#7fb4ea 100%);border:1px solid #111;box-shadow:0 0 0 0.6px #222"></div>
<div class="ab" style="left:386.5px;top:1242.5px;width:11px;height:11px;border-radius:50%;background:linear-gradient(#5f86e0 0%,#4a6fd0 40%,#243a9c 50%,#1f3290 100%)"></div>
<div class="t" style="left:408.00px;top:1238.80px;font-size:15px;font-family:'Liberation Sans', sans-serif;font-weight:normal;color:#fff;transform:scaleX(0.9897);transform-origin:left 0;">Unsigned decimal</div>
<div class="ab" style="left:620px;top:1238px;width:20px;height:20px;border-radius:50%;background:radial-gradient(circle at 50% 45%,#d8ecff 0,#a9d2fa 55%,#7fb4ea 100%);border:1px solid #111;box-shadow:0 0 0 0.6px #222"></div>
<div class="ab" style="left:624.5px;top:1242.5px;width:11px;height:11px;border-radius:50%;background:linear-gradient(#5f86e0 0%,#4a6fd0 40%,#243a9c 50%,#1f3290 100%)"></div>
<div class="t" style="left:646.00px;top:1238.80px;font-size:15px;font-family:'Liberation Sans', sans-serif;font-weight:normal;color:#fff;transform:scaleX(0.8959);transform-origin:left 0;">MSB-LSB</div>
<div class="ab" style="left:711px;top:1238px;width:20px;height:20px;border-radius:50%;background:linear-gradient(#b4b4b4 0%,#9c9c9c 40%,#7e7e7e 55%,#8e8e8e 100%);border:1px solid #111;box-shadow:0 0 0 0.6px #222"></div>
<div class="t" style="left:737.00px;top:1238.80px;font-size:15px;font-family:'Liberation Sans', sans-serif;font-weight:normal;color:#fff;transform:scaleX(0.8959);transform-origin:left 0;">LSB-MSB</div>
<div class="t" style="left:5.00px;top:1269.30px;font-size:15px;font-family:'Liberation Sans', sans-serif;font-weight:bold;color:#8b0000;transform:scaleX(1.0639);transform-origin:left 0;">Running...</div>
<div class="t" style="left:93.00px;top:1269.30px;font-size:15px;font-family:'Liberation Sans', sans-serif;font-weight:bold;color:#000;transform:scaleX(1.1048);transform-origin:left 0;">Main(2)</div>
<div class="t" style="left:1438.00px;top:1269.30px;font-size:15px;font-family:'Liberation Sans', sans-serif;font-weight:bold;color:#000;transform:scaleX(1.1139);transform-origin:left 0;">Iterations per second: 87.67</div>
<div class="t" style="left:1676.00px;top:1269.30px;font-size:15px;font-family:'Liberation Sans', sans-serif;font-weight:bold;color:#000;transform:scaleX(1.1021);transform-origin:left 0;">Time elapsed: 21.77 s</div>
</body></html>
